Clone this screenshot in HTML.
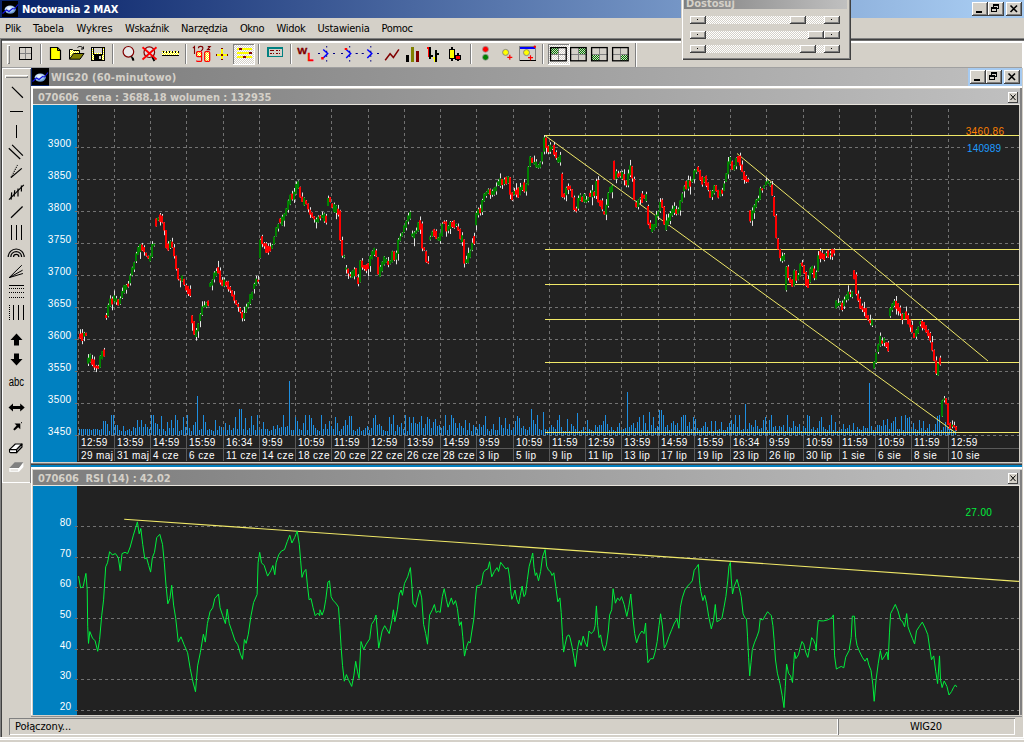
<!DOCTYPE html>
<html lang="pl"><head><meta charset="utf-8"><title>Notowania 2 MAX</title>
<style>
html,body{margin:0;padding:0;}
body{width:1024px;height:742px;overflow:hidden;background:#d4d0c8;position:relative;font:11px 'DejaVu Sans Condensed','Liberation Sans',sans-serif;color:#000;}
.a{position:absolute;}
.t{position:absolute;white-space:pre;line-height:13px;}
.btn{position:absolute;background:#d4d0c8;box-shadow:inset -1px -1px 0 #404040,inset 1px 1px 0 #fff,inset -2px -2px 0 #808080;}
.sep{position:absolute;width:1px;background:#808080;box-shadow:1px 0 0 #fff;}
svg{position:absolute;left:0;top:0;overflow:visible}

</style></head><body>
<div class="a" style="left:0;top:0;width:1024px;height:18px;background:linear-gradient(90deg,#0a246a 0,#0a246a 2%,#a6caf0 96%,#a6caf0 100%)"></div>
<svg width="1024" height="742" viewBox="0 0 1024 742"><g transform="translate(2,1)"><rect width="16" height="16" fill="#000"/><defs><radialGradient id="g21" cx="40%" cy="35%" r="70%"><stop offset="0" stop-color="#fff"/><stop offset="0.6" stop-color="#9cc4ee"/><stop offset="1" stop-color="#4a78b8"/></radialGradient></defs><ellipse cx="8.2" cy="8.6" rx="5.6" ry="4.2" fill="url(#g21)"/><polyline points="0.5,12.5 4.5,9 7,10.5 10.5,7.5 12.5,8 16,3.5" fill="none" stroke="#1010e0" stroke-width="1.1"/></g></svg>
<div class="t" style="left:22px;top:3px;font-weight:bold;color:#fff;letter-spacing:-0.15px">Notowania 2 MAX</div>
<div class="btn" style="left:972px;top:2px;width:16px;height:14px"></div>
<svg width="1024" height="742" viewBox="0 0 1024 742" shape-rendering="crispEdges"><g transform="translate(972,2)"><rect x="4" y="9" width="6" height="2" fill="#000"/></g></svg>
<div class="btn" style="left:988px;top:2px;width:16px;height:14px"></div>
<svg width="1024" height="742" viewBox="0 0 1024 742" shape-rendering="crispEdges"><g transform="translate(988,2)"><rect x="5.5" y="2.5" width="5" height="4" fill="none" stroke="#000"/><rect x="5" y="2" width="6" height="2" fill="#000"/><rect x="3.5" y="5.5" width="5" height="4" fill="#d4d0c8" stroke="#000"/><rect x="3" y="5" width="6" height="2" fill="#000"/></g></svg>
<div class="btn" style="left:1006px;top:2px;width:16px;height:14px"></div>
<svg width="1024" height="742" viewBox="0 0 1024 742" shape-rendering="crispEdges"><g transform="translate(1006,2)"><g shape-rendering="auto"><path d="M4.5 3.5 L11 10 M11 3.5 L4.5 10" stroke="#000" stroke-width="1.6" fill="none"/></g></g></svg>
<div class="t" style="left:5px;top:22px;letter-spacing:-0.30px">Plik</div>
<div class="t" style="left:33px;top:22px;letter-spacing:-0.08px">Tabela</div>
<div class="t" style="left:76.5px;top:22px;letter-spacing:-0.04px">Wykres</div>
<div class="t" style="left:125px;top:22px;letter-spacing:-0.31px">Wskaźnik</div>
<div class="t" style="left:181px;top:22px;letter-spacing:-0.29px">Narzędzia</div>
<div class="t" style="left:240px;top:22px;letter-spacing:-0.46px">Okno</div>
<div class="t" style="left:276.5px;top:22px;letter-spacing:-0.28px">Widok</div>
<div class="t" style="left:317.5px;top:22px;letter-spacing:-0.24px">Ustawienia</div>
<div class="t" style="left:381.5px;top:22px;letter-spacing:-0.36px">Pomoc</div>
<div class="a" style="left:0;top:38px;width:1024px;height:1px;background:#808080"></div>
<div class="a" style="left:1px;top:39px;width:1023px;height:1px;background:#404040"></div>
<div class="a" style="left:2px;top:40px;width:1022px;height:1px;background:#707070"></div>
<div class="a" style="left:2px;top:41px;width:1021px;height:2px;background:#fff"></div>
<div class="a" style="left:0;top:38px;width:1px;height:700px;background:#808080"></div>
<div class="a" style="left:1px;top:39px;width:1px;height:698px;background:#404040"></div>
<div class="a" style="left:1022px;top:41px;width:1px;height:27px;background:#fff"></div>
<div class="a" style="left:635px;top:43px;width:1px;height:24px;background:#808080"></div>
<div class="a" style="left:636px;top:43px;width:1px;height:24px;background:#fff"></div>
<div class="a" style="left:2px;top:67px;width:1020px;height:1px;background:#a0a0a0"></div>
<div class="a" style="left:7px;top:45px;width:3px;height:19px;background:#d4d0c8;box-shadow:inset 1px 1px 0 #fff,inset -1px -1px 0 #808080"></div>
<div class="sep" style="left:39.5px;top:44px;height:20px"></div>
<div class="sep" style="left:112px;top:44px;height:20px"></div>
<div class="sep" style="left:185px;top:44px;height:20px"></div>
<div class="sep" style="left:258px;top:44px;height:20px"></div>
<div class="sep" style="left:290px;top:44px;height:20px"></div>
<div class="sep" style="left:469.5px;top:44px;height:20px"></div>
<div class="sep" style="left:542px;top:44px;height:20px"></div>
<svg width="1024" height="742" viewBox="0 0 1024 742">
<defs>
<pattern id="dy" width="2" height="2" patternUnits="userSpaceOnUse"><rect width="2" height="2" fill="#ffff00"/><rect width="1" height="1" fill="#fff"/><rect x="1" y="1" width="1" height="1" fill="#fff"/></pattern>
<pattern id="dw" width="2" height="2" patternUnits="userSpaceOnUse"><rect width="2" height="2" fill="#d4d0c8"/><rect width="1" height="1" fill="#fff"/><rect x="1" y="1" width="1" height="1" fill="#fff"/></pattern>
<pattern id="dg" width="2" height="2" patternUnits="userSpaceOnUse"><rect width="2" height="2" fill="#008000"/><rect width="1" height="1" fill="#d4d0c8"/><rect x="1" y="1" width="1" height="1" fill="#d4d0c8"/></pattern>
</defs>
<g shape-rendering="crispEdges"><path d="M25.5 48V59M20 53.5H32" stroke="#808080" stroke-width="1" fill="none"/><rect x="19.5" y="47.5" width="12" height="12" fill="none" stroke="#000"/></g>
<path d="M50.5 47.5H57.5L60.5 50.5V59.5H50.5Z" fill="#ffff00" stroke="#000" stroke-width="1.2"/><path d="M57.5 47.5V50.5H60.5" fill="none" stroke="#000" stroke-width="1"/>
<path d="M69.5 59V49.5H72.5L73.5 50.5H79.5V53" fill="url(#dy)" stroke="#000" stroke-width="1"/><path d="M69.5 59.2L73.5 53.5H84L80 59.2Z" fill="#808000" stroke="#000" stroke-width="1"/><path d="M77.5 47.5C79.5 45.8 82 46.2 83 48.5M83.4 46.5V49H81" fill="none" stroke="#000" stroke-width="1"/>
<g shape-rendering="crispEdges"><rect x="91.5" y="47.5" width="13" height="13" fill="url(#dy)" stroke="#000"/><rect x="94" y="48" width="8" height="5" fill="#d4d0c8"/><rect x="94" y="55" width="8" height="5" fill="#000"/><rect x="99" y="56" width="2" height="3" fill="#d4d0c8"/><path d="M93.5 48V54.5H102.5V48" fill="none" stroke="#000"/></g>
<circle cx="128.4" cy="51.8" r="5.3" fill="#e8e8e8" stroke="#800000" stroke-width="1.2"/><path d="M131.3 56.5L133.3 59.2" stroke="#000" stroke-width="1.4"/><path d="M132.3 58L133.6 60.6" stroke="#000" stroke-width="2"/>
<circle cx="149.3" cy="52.2" r="5.3" fill="#e0e0e0" stroke="#800000" stroke-width="1.2"/><path d="M152.3 57L154.4 61" stroke="#000" stroke-width="1.8"/><path d="M142.5 47.3L156.5 59.5M156.5 47.3L142.5 59.5" stroke="#ff0000" stroke-width="1.8"/>
<g shape-rendering="crispEdges"><rect x="162" y="51" width="17" height="4" fill="url(#dy)"/><rect x="162" y="55" width="17" height="1" fill="#000"/><path d="M163.5 51V53M166.5 51V53M169.5 51V53M172.5 51V53M175.5 51V53M178.5 51V53" stroke="#000"/></g>
<g fill="none" stroke="#800000" stroke-width="1.1"><path d="M192.9 48.2L194.5 46.6V54"/><path d="M198.4 48.2Q198.5 46.4 200.7 46.4Q202.9 46.4 202.9 48.2Q202.9 49.6 201 51"/><path d="M207.8 46.6H210.2L207.4 49.6H210.2"/></g>
<rect x="197" y="52" width="4" height="4.5" fill="url(#dy)"/><rect x="205" y="52" width="4.4" height="9" fill="url(#dy)"/>
<path d="M201.6 56.6H197.6Q196.6 56.6 196.6 55.6V52.6Q196.6 51.6 197.6 51.6H200.6Q201.6 51.6 201.6 52.6V60.4Q201.6 61.4 200.6 61.4H197.6Q196.6 61.4 196.6 60.4" fill="none" stroke="#ff0000" stroke-width="1.25"/><rect x="204.7" y="51.6" width="5" height="9.8" rx="1.2" fill="none" stroke="#ff0000" stroke-width="1.25"/>
<g shape-rendering="crispEdges"><rect x="216" y="54" width="12" height="2" fill="#ffff00"/><rect x="221" y="48" width="2" height="12" fill="#ffff00"/><rect x="221" y="54" width="2" height="2" fill="#800000"/><rect x="216" y="54" width="1" height="2" fill="#800000"/><rect x="227" y="54" width="1" height="2" fill="#800000"/><rect x="221" y="48" width="2" height="1" fill="#800000"/><rect x="221" y="59" width="2" height="1" fill="#800000"/></g>
<g shape-rendering="crispEdges"><rect x="233" y="44" width="21" height="20" fill="url(#dw)"/><path d="M233 64V44H254" fill="none" stroke="#808080"/><path d="M254 44V64H233" fill="none" stroke="#fff"/></g>
<g shape-rendering="crispEdges"><rect x="237" y="48" width="15" height="2" fill="#ffff00"/><rect x="237" y="52" width="15" height="2" fill="#ffff00"/><rect x="237" y="56" width="15" height="2" fill="#ffff00"/><rect x="239" y="48" width="3" height="2" fill="#800000"/><rect x="249" y="52" width="3" height="2" fill="#800000"/><rect x="243" y="56" width="3" height="2" fill="#800000"/></g>
<g shape-rendering="crispEdges"><rect x="267.75" y="47.75" width="14.5" height="8.5" fill="none" stroke="#008080" stroke-width="1.5"/><path d="M270 50.5H274M276 50.5H278M279 50.5H280M270 53.5H272M273 53.5H274M276 53.5H278M279 53.5H280" stroke="#800000"/></g>
<text x="297.3" y="54" font-family="'Liberation Sans',sans-serif" font-size="9.5" font-weight="bold" fill="#800000" stroke="#800000" stroke-width="0.3" textLength="10" lengthAdjust="spacingAndGlyphs">W</text><text x="307.6" y="60.8" font-family="'Liberation Sans',sans-serif" font-size="10" font-weight="bold" fill="#ff0000" stroke="#ff0000" stroke-width="0.4">L</text>
<path d="M323.2 49.5L327.7 53.5L323.2 58" fill="none" stroke="#0000ff" stroke-width="1.5"/>
<path d="M326.7 46V62" stroke="#000080" stroke-width="1" stroke-dasharray="1.5 3.2" fill="none"/>
<path d="M318 53.5H320" stroke="#000080" stroke-width="1"/>
<path d="M333 53.5H335" stroke="#000080" stroke-width="1"/>
<rect x="321.2" y="57" width="2.5" height="2.5" fill="#ff0000"/>
<path d="M346.2 49.5L350.7 53.5L346.2 58" fill="none" stroke="#0000ff" stroke-width="1.5"/>
<path d="M349.7 46V62" stroke="#000080" stroke-width="1" stroke-dasharray="1.5 3.2" fill="none"/>
<path d="M341 53.5H343" stroke="#000080" stroke-width="1"/>
<path d="M355.6 53.5H357.8" stroke="#000080" stroke-width="1"/>
<rect x="344.7" y="48" width="2.5" height="2" fill="#ff0000"/>
<path d="M367.3 49.5L371.8 53.5L367.3 58" fill="none" stroke="#0000ff" stroke-width="1.5"/>
<path d="M370.8 46V62" stroke="#000080" stroke-width="1" stroke-dasharray="1.5 3.2" fill="none"/>
<path d="M361.7 53.5H363.8" stroke="#000080" stroke-width="1"/>
<path d="M377 53.5H379" stroke="#000080" stroke-width="1"/>
<polyline points="385.2,60.2 390.1,53.7 393.4,57.5 398.9,49.3" fill="none" stroke="#800000" stroke-width="1.5"/>
<g shape-rendering="crispEdges"><rect x="406" y="55" width="3" height="7" fill="#000"/><rect x="411" y="47" width="3" height="15" fill="#808000"/><rect x="416" y="51" width="3" height="11" fill="#800000"/></g>
<g shape-rendering="crispEdges"><rect x="429" y="47" width="2" height="12" fill="#000"/><rect x="427" y="47" width="2" height="2" fill="#ff0000"/><rect x="428" y="49" width="1" height="8" fill="#ff0000"/><rect x="431" y="55" width="2" height="2" fill="#000"/><rect x="435" y="50" width="2" height="12" fill="#000"/><rect x="433" y="57" width="2" height="2" fill="#ffff00"/><rect x="434" y="57" width="1" height="5" fill="#ffff00"/><rect x="437" y="53" width="2" height="2" fill="#000"/></g>
<g shape-rendering="crispEdges"><rect x="451" y="47" width="2" height="14" fill="#000"/><rect x="449.5" y="49.5" width="5" height="9" fill="#ffff00" stroke="#000"/><rect x="457" y="53" width="2" height="8" fill="#000"/><rect x="455.5" y="55.5" width="5" height="4" fill="#ff0000" stroke="#000"/></g>
<circle cx="485.5" cy="49.3" r="3" fill="#ff0000" stroke="#a0a0a0" stroke-width="0.8"/><circle cx="485.5" cy="57.3" r="3" fill="#008000" stroke="#a0a0a0" stroke-width="0.8"/>
<circle cx="505.6" cy="52.4" r="3" fill="#ffff00" stroke="#808080" stroke-width="0.9"/><path d="M507.3 57.3H512.3M509.8 54.8V59.8" stroke="#ff0000" stroke-width="1.2"/>
<g shape-rendering="crispEdges"><rect x="519.5" y="46.5" width="16" height="14" fill="#d4d0c8" stroke="#808080"/><rect x="520" y="47" width="15" height="2" fill="#0000ff"/><rect x="520" y="60" width="16" height="1" fill="#000"/></g><circle cx="534.8" cy="46.8" r="1.2" fill="#ff0000"/><circle cx="526.5" cy="52.6" r="3" fill="#ffff00" stroke="#808080" stroke-width="0.9"/><path d="M528 57.7H533M530.5 55.2V60.2" stroke="#ff0000" stroke-width="1.2"/>
<g shape-rendering="crispEdges"><rect x="548" y="44" width="21" height="20" fill="url(#dw)"/><path d="M548 64V44H569" fill="none" stroke="#808080"/><path d="M569 44V64H548" fill="none" stroke="#fff"/></g>
<g shape-rendering="crispEdges"><rect x="551" y="48" width="7" height="6" fill="url(#dg)"/><path d="M558.5 47.5V61M550 54.5H566.5" stroke="#808080" fill="none"/></g><rect x="550.6" y="47.6" width="15.6" height="13.2" fill="none" stroke="#000" stroke-width="1.3"/>
<g shape-rendering="crispEdges"><rect x="578.5" y="48" width="7" height="6" fill="url(#dg)"/><path d="M578.5 47.5V61M570 54.5H586.5" stroke="#808080" fill="none"/></g><rect x="570.6" y="47.6" width="15.6" height="13.2" fill="none" stroke="#000" stroke-width="1.3"/>
<g shape-rendering="crispEdges"><rect x="592" y="54.5" width="7" height="6" fill="url(#dg)"/><path d="M599.5 47.5V61M591 54.5H607.5" stroke="#808080" fill="none"/></g><rect x="591.6" y="47.6" width="15.6" height="13.2" fill="none" stroke="#000" stroke-width="1.3"/>
<g shape-rendering="crispEdges"><rect x="620.5" y="54.5" width="7" height="6" fill="url(#dg)"/><path d="M620.5 47.5V61M612 54.5H628.5" stroke="#808080" fill="none"/></g><rect x="612.6" y="47.6" width="15.6" height="13.2" fill="none" stroke="#000" stroke-width="1.3"/>
</svg>
<div class="a" style="left:681px;top:0;width:170px;height:60px;background:#d4d0c8;box-shadow:inset 1px 0 0 #d4d0c8,inset 2px 0 0 #fff,inset -1px -1px 0 #404040,inset -2px -2px 0 #808080"></div>
<div class="a" style="left:684px;top:0;width:163px;height:9px;background:linear-gradient(90deg,#808080,#c0c0c0);overflow:hidden"><div class="t" style="left:2px;top:-3px;font-weight:bold;color:#d4d0c8">Dostosuj</div></div>
<div class="a" style="left:706px;top:16px;width:118px;height:8px;background:repeating-conic-gradient(#fff 0 25%,#d4d0c8 0 50%) 0 0/2px 2px"></div>
<div class="btn" style="left:690px;top:16px;width:16px;height:8px"></div>
<div class="btn" style="left:824px;top:16px;width:16px;height:8px"></div>
<div class="btn" style="left:790px;top:16px;width:16px;height:8px"></div>
<div class="a" style="left:697px;top:19px;width:1px;height:1px;background:#000"></div><div class="a" style="left:831px;top:19px;width:1px;height:1px;background:#000"></div>
<div class="a" style="left:706px;top:31px;width:118px;height:8px;background:repeating-conic-gradient(#fff 0 25%,#d4d0c8 0 50%) 0 0/2px 2px"></div>
<div class="btn" style="left:690px;top:31px;width:16px;height:8px"></div>
<div class="btn" style="left:824px;top:31px;width:16px;height:8px"></div>
<div class="btn" style="left:808px;top:31px;width:16px;height:8px"></div>
<div class="a" style="left:697px;top:34px;width:1px;height:1px;background:#000"></div><div class="a" style="left:831px;top:34px;width:1px;height:1px;background:#000"></div>
<div class="a" style="left:706px;top:45px;width:118px;height:8px;background:repeating-conic-gradient(#fff 0 25%,#d4d0c8 0 50%) 0 0/2px 2px"></div>
<div class="btn" style="left:690px;top:45px;width:16px;height:8px"></div>
<div class="btn" style="left:824px;top:45px;width:16px;height:8px"></div>
<div class="btn" style="left:800px;top:45px;width:16px;height:8px"></div>
<div class="a" style="left:697px;top:48px;width:1px;height:1px;background:#000"></div><div class="a" style="left:831px;top:48px;width:1px;height:1px;background:#000"></div>
<div class="a" style="left:2px;top:68px;width:29px;height:415px;box-shadow:inset 1px 1px 0 #fff,inset -1px 0 0 #808080,inset 0 -1px 0 #fff"></div>
<div class="a" style="left:5px;top:75px;width:23px;height:3px;box-shadow:inset 1px 1px 0 #fff,inset -1px -1px 0 #808080"></div>
<svg width="1024" height="742" viewBox="0 0 1024 742"><g stroke="#000" stroke-width="1.2" fill="none">
<path d="M11.9 86.9L22.9 97.7"/><path d="M10 111.5H23" shape-rendering="crispEdges"/><path d="M16.5 125V137.5" shape-rendering="crispEdges"/>
<path d="M8.8 148.2L20.2 159M12.1 144.8L22.9 155.6"/>
<path d="M11 177.5L21.8 168.4"/><path d="M11 177.5L17.5 165.1" stroke-dasharray="1 1.2"/>
<path d="M9 199.7L23.8 184.8"/><path d="M11.1 199.6L11.7 192.4M14.1 196.6L14.7 190.3M18 196.4V188.5M21.4 191.5V185.5" stroke-width="1.2"/>
<path d="M11 217.7L22.6 206.5"/>
<path d="M11.5 225V239.5M16.5 225V239.5M21.5 225V239.5" shape-rendering="crispEdges"/>
<path d="M8.2 257A8 8 0 0 1 24.2 257M10.8 257A5.4 5.4 0 0 1 21.6 257M13.5 257A2.7 2.7 0 0 1 18.9 257"/>
<path d="M9.2 277.6L21.8 265.2M9.2 277.6L22.6 270.2M9.2 277.6L22.9 273.5" stroke-width="1"/>
<g shape-rendering="crispEdges"><path d="M9 285.5H24"/><path d="M9 288.5H24M9 292.5H24M9 297.5H24" stroke-dasharray="1 1"/>
<path d="M9.5 305V320" stroke-dasharray="1 1"/><path d="M13.5 305V320M18.5 305V320M23.5 305V320"/></g>
</g><g fill="#000">
<path d="M16.5 333.5L22.5 340H19V345.5H14V340H10.5Z"/>
<path d="M16.5 365.5L22.5 359H19V353.5H14V359H10.5Z"/>
<path d="M8.5 407.5L13 403.6V406.1H20.2V403.6L24.7 407.5L20.2 411.4V408.9H13V411.4Z"/>
<path d="M14.5 423.5H20.3V429.2L18.2 427.2L14.6 430.6L13.2 429.2L16.6 425.6Z"/><rect x="21" y="422.2" width="1" height="1"/>
</g>
<path d="M9.5 449.6L15.3 444H22L16.6 449.6Z" fill="#fff" stroke="#000" stroke-width="1.1" stroke-linejoin="round"/><path d="M9.5 449.6V451.5Q9.5 452.6 10.6 452.6H16.6V449.6Z" fill="#fff" stroke="#000" stroke-width="1.1"/><path d="M16.6 452.6L22 447V444L16.6 449.6Z" fill="#b0b0b0" stroke="#000" stroke-width="1.1" stroke-linejoin="round"/>
<path d="M9.3 468L14.7 462.2H23.3L19 468Z" fill="#808080"/><path d="M9.3 468V471.8H19V468Z" fill="#fff"/><path d="M19 471.8L23.4 467V462.4L19 468Z" fill="#fff"/><path d="M10.5 470H18" stroke="#d4d0c8" stroke-width="1"/>
<text x="8.7" y="385.5" font-family="'Liberation Sans',sans-serif" font-size="12" fill="#000" textLength="15.3" lengthAdjust="spacingAndGlyphs">abc</text>
</svg>
<div class="a" style="left:31px;top:68px;width:991px;height:18px;background:linear-gradient(90deg,#808080 0,#808080 8%,#c0c0c0 100%)"></div>
<div class="a" style="left:968px;top:68px;width:54px;height:18px;background:#a6caf0"></div>
<div class="a" style="left:31px;top:68px;width:18px;height:18px;background:#000;box-shadow:inset 1px 0 0 #0a246a,inset 0 -1px 0 #0a246a"></div>
<svg width="1024" height="742" viewBox="0 0 1024 742"><g transform="translate(32,69)"><rect width="16" height="16" fill="#000"/><defs><radialGradient id="g3269" cx="40%" cy="35%" r="70%"><stop offset="0" stop-color="#fff"/><stop offset="0.6" stop-color="#9cc4ee"/><stop offset="1" stop-color="#4a78b8"/></radialGradient></defs><ellipse cx="8.2" cy="8.6" rx="5.6" ry="4.2" fill="url(#g3269)"/><polyline points="0.5,12.5 4.5,9 7,10.5 10.5,7.5 12.5,8 16,3.5" fill="none" stroke="#1010e0" stroke-width="1.1"/></g></svg>
<div class="t" style="left:51px;top:71px;font-weight:bold;color:#d4d0c8;letter-spacing:0.18px">WIG20 (60-minutowo)</div>
<div class="btn" style="left:970px;top:70px;width:16px;height:14px"></div>
<svg width="1024" height="742" viewBox="0 0 1024 742" shape-rendering="crispEdges"><g transform="translate(970,70)"><rect x="4" y="9" width="6" height="2" fill="#000"/></g></svg>
<div class="btn" style="left:986px;top:70px;width:16px;height:14px"></div>
<svg width="1024" height="742" viewBox="0 0 1024 742" shape-rendering="crispEdges"><g transform="translate(986,70)"><rect x="5.5" y="2.5" width="5" height="4" fill="none" stroke="#000"/><rect x="5" y="2" width="6" height="2" fill="#000"/><rect x="3.5" y="5.5" width="5" height="4" fill="#d4d0c8" stroke="#000"/><rect x="3" y="5" width="6" height="2" fill="#000"/></g></svg>
<div class="btn" style="left:1004px;top:70px;width:16px;height:14px"></div>
<svg width="1024" height="742" viewBox="0 0 1024 742" shape-rendering="crispEdges"><g transform="translate(1004,70)"><g shape-rendering="auto"><path d="M4.5 3.5 L11 10 M11 3.5 L4.5 10" stroke="#000" stroke-width="1.6" fill="none"/></g></g></svg>
<div class="a" style="left:31px;top:86px;width:991px;height:2px;background:#fff"></div>
<div class="a" style="left:31px;top:86px;width:2px;height:630px;background:#fff"></div>
<div class="a" style="left:30px;top:86px;width:1px;height:397px;background:#808080"></div>
<div class="a" style="left:1020px;top:88px;width:2px;height:629px;background:#808080"></div>
<div class="a" style="left:1023px;top:41px;width:1px;height:699px;background:#fff"></div>
<div class="a" style="left:33px;top:89px;width:987px;height:15px;background:linear-gradient(90deg,#808080 0,#808080 8%,#c0c0c0 100%)"></div>
<div class="t" style="left:38px;top:91px;font-weight:bold;color:#d4d0c8;letter-spacing:-0.08px">070606  cena : 3688.18 wolumen : 132935</div>
<div class="btn" style="left:1008px;top:92px;width:10px;height:11px;box-shadow:inset -1px -1px 0 #404040,inset 1px 1px 0 #fff"></div>
<svg width="1024" height="742" viewBox="0 0 1024 742"><path d="M1010.5 94.5L1015.5 100M1015.5 94.5L1010.5 100" stroke="#000" stroke-width="1"/></svg>
<div class="a" style="left:33px;top:104px;width:987px;height:1px;background:#e8e4dc"></div>
<div class="a" style="left:33px;top:105px;width:44px;height:357px;background:#0080c0"></div>
<div class="a" style="left:77px;top:105px;width:942px;height:357px;background:#222222"></div>
<div class="a" style="left:33px;top:462px;width:989px;height:1px;background:#d4d0c8"></div>
<div class="a" style="left:31px;top:463px;width:991px;height:1px;background:#808080"></div>
<div class="a" style="left:31px;top:464px;width:991px;height:1px;background:#404040"></div>
<div class="a" style="left:31px;top:465px;width:991px;height:2px;background:#0080c0"></div>
<div class="a" style="left:31px;top:467px;width:991px;height:2px;background:#fff"></div>
<div class="a" style="left:33px;top:469px;width:989px;height:1px;background:#d4d0c8"></div>
<div class="a" style="left:32px;top:469px;width:1px;height:246px;background:#d4d0c8"></div>
<div class="a" style="left:33px;top:470px;width:987px;height:15px;background:linear-gradient(90deg,#808080 0,#808080 8%,#c0c0c0 100%)"></div>
<div class="t" style="left:38px;top:472px;font-weight:bold;color:#d4d0c8;letter-spacing:-0.1px">070606  RSI (14) : 42.02</div>
<div class="btn" style="left:1008px;top:473px;width:10px;height:11px;box-shadow:inset -1px -1px 0 #404040,inset 1px 1px 0 #fff"></div>
<svg width="1024" height="742" viewBox="0 0 1024 742"><path d="M1010.5 475.5L1015.5 481M1015.5 475.5L1010.5 481" stroke="#000" stroke-width="1"/></svg>
<div class="a" style="left:33px;top:485px;width:987px;height:1px;background:#e8e4dc"></div>
<div class="a" style="left:33px;top:486px;width:44px;height:229px;background:#0080c0"></div>
<div class="a" style="left:77px;top:486px;width:942px;height:229px;background:#222222"></div>
<div class="a" style="left:31px;top:715px;width:991px;height:1px;background:#d4d0c8"></div>
<div class="a" style="left:31px;top:716px;width:991px;height:1px;background:#909090"></div>
<svg width="1024" height="742" viewBox="0 0 1024 742">
<g shape-rendering="crispEdges" stroke="#727272" stroke-width="1" stroke-dasharray="3 3" fill="none">
<path d="M78.5 109V436"/>
<path d="M114.5 109V436"/>
<path d="M150.5 109V436"/>
<path d="M186.5 109V436"/>
<path d="M223.5 109V436"/>
<path d="M259.5 109V436"/>
<path d="M295.5 109V436"/>
<path d="M331.5 109V436"/>
<path d="M368.5 109V436"/>
<path d="M404.5 109V436"/>
<path d="M440.5 109V436"/>
<path d="M476.5 109V436"/>
<path d="M513.5 109V436"/>
<path d="M549.5 109V436"/>
<path d="M585.5 109V436"/>
<path d="M621.5 109V436"/>
<path d="M658.5 109V436"/>
<path d="M694.5 109V436"/>
<path d="M730.5 109V436"/>
<path d="M766.5 109V436"/>
<path d="M803.5 109V436"/>
<path d="M839.5 109V436"/>
<path d="M875.5 109V436"/>
<path d="M911.5 109V436"/>
<path d="M948.5 109V436"/>
<path d="M81 147.5H1019"/>
<path d="M81 179.5H1019"/>
<path d="M81 211.5H1019"/>
<path d="M81 243.5H1019"/>
<path d="M81 275.5H1019"/>
<path d="M81 307.5H1019"/>
<path d="M81 339.5H1019"/>
<path d="M81 371.5H1019"/>
<path d="M81 403.5H1019"/>
<path d="M81 435.5H1019"/>
<path d="M81 526.5H1019"/>
<path d="M81 557.5H1019"/>
<path d="M81 587.5H1019"/>
<path d="M81 618.5H1019"/>
<path d="M81 649.5H1019"/>
<path d="M81 679.5H1019"/>
<path d="M81 710.5H1019"/>
</g>
<g shape-rendering="crispEdges" stroke="#707070" stroke-width="1">
<path d="M75 147.5H78"/>
<path d="M75 179.5H78"/>
<path d="M75 211.5H78"/>
<path d="M75 243.5H78"/>
<path d="M75 275.5H78"/>
<path d="M75 307.5H78"/>
<path d="M75 339.5H78"/>
<path d="M75 371.5H78"/>
<path d="M75 403.5H78"/>
<path d="M75 435.5H78"/>
<path d="M75 526.5H78"/>
<path d="M75 557.5H78"/>
<path d="M75 587.5H78"/>
<path d="M75 618.5H78"/>
<path d="M75 649.5H78"/>
<path d="M75 679.5H78"/>
<path d="M75 710.5H78"/>
</g>
<g shape-rendering="crispEdges" stroke="#5a5a5a" stroke-width="1" fill="none">
<path d="M78 448.5H1019"/>
<path d="M78.5 436V461"/>
<path d="M114.5 436V461"/>
<path d="M150.5 436V461"/>
<path d="M186.5 436V461"/>
<path d="M223.5 436V461"/>
<path d="M259.5 436V461"/>
<path d="M295.5 436V461"/>
<path d="M331.5 436V461"/>
<path d="M368.5 436V461"/>
<path d="M404.5 436V461"/>
<path d="M440.5 436V461"/>
<path d="M476.5 436V461"/>
<path d="M513.5 436V461"/>
<path d="M549.5 436V461"/>
<path d="M585.5 436V461"/>
<path d="M621.5 436V461"/>
<path d="M658.5 436V461"/>
<path d="M694.5 436V461"/>
<path d="M730.5 436V461"/>
<path d="M766.5 436V461"/>
<path d="M803.5 436V461"/>
<path d="M839.5 436V461"/>
<path d="M875.5 436V461"/>
<path d="M911.5 436V461"/>
<path d="M948.5 436V461"/>
</g>
<g shape-rendering="crispEdges" fill="#1e8ee0">
<rect x="79" y="429" width="1" height="6"/>
<rect x="81" y="429" width="1" height="6"/>
<rect x="83" y="429" width="1" height="6"/>
<rect x="85" y="429" width="1" height="6"/>
<rect x="87" y="429" width="1" height="6"/>
<rect x="89" y="429" width="1" height="6"/>
<rect x="91" y="430" width="1" height="5"/>
<rect x="93" y="429" width="1" height="6"/>
<rect x="95" y="429" width="1" height="6"/>
<rect x="97" y="429" width="1" height="6"/>
<rect x="99" y="430" width="1" height="5"/>
<rect x="101" y="429" width="1" height="6"/>
<rect x="103" y="421" width="1" height="14"/>
<rect x="105" y="421" width="1" height="14"/>
<rect x="107" y="424" width="1" height="11"/>
<rect x="109" y="431" width="1" height="4"/>
<rect x="111" y="415" width="1" height="20"/>
<rect x="113" y="415" width="1" height="20"/>
<rect x="115" y="425" width="1" height="10"/>
<rect x="117" y="425" width="1" height="10"/>
<rect x="119" y="430" width="1" height="5"/>
<rect x="121" y="431" width="1" height="4"/>
<rect x="123" y="426" width="1" height="9"/>
<rect x="125" y="431" width="1" height="4"/>
<rect x="127" y="430" width="1" height="5"/>
<rect x="129" y="429" width="1" height="6"/>
<rect x="131" y="431" width="1" height="4"/>
<rect x="133" y="427" width="1" height="8"/>
<rect x="135" y="428" width="1" height="7"/>
<rect x="137" y="420" width="1" height="15"/>
<rect x="139" y="427" width="1" height="8"/>
<rect x="141" y="420" width="1" height="15"/>
<rect x="143" y="427" width="1" height="8"/>
<rect x="145" y="424" width="1" height="11"/>
<rect x="147" y="427" width="1" height="8"/>
<rect x="149" y="429" width="1" height="6"/>
<rect x="151" y="415" width="1" height="20"/>
<rect x="153" y="415" width="1" height="20"/>
<rect x="155" y="423" width="1" height="12"/>
<rect x="157" y="424" width="1" height="11"/>
<rect x="159" y="429" width="1" height="6"/>
<rect x="161" y="416" width="1" height="19"/>
<rect x="163" y="429" width="1" height="6"/>
<rect x="165" y="431" width="1" height="4"/>
<rect x="167" y="422" width="1" height="13"/>
<rect x="169" y="428" width="1" height="7"/>
<rect x="171" y="420" width="1" height="15"/>
<rect x="173" y="428" width="1" height="7"/>
<rect x="175" y="415" width="1" height="20"/>
<rect x="177" y="420" width="1" height="15"/>
<rect x="179" y="431" width="1" height="4"/>
<rect x="181" y="430" width="1" height="5"/>
<rect x="183" y="417" width="1" height="18"/>
<rect x="185" y="427" width="1" height="8"/>
<rect x="187" y="415" width="1" height="20"/>
<rect x="189" y="428" width="1" height="7"/>
<rect x="191" y="431" width="1" height="4"/>
<rect x="193" y="425" width="1" height="10"/>
<rect x="195" y="422" width="1" height="13"/>
<rect x="197" y="396" width="1" height="39"/>
<rect x="199" y="430" width="1" height="5"/>
<rect x="201" y="429" width="1" height="6"/>
<rect x="203" y="415" width="1" height="20"/>
<rect x="205" y="422" width="1" height="13"/>
<rect x="207" y="430" width="1" height="5"/>
<rect x="209" y="429" width="1" height="6"/>
<rect x="211" y="430" width="1" height="5"/>
<rect x="213" y="431" width="1" height="4"/>
<rect x="215" y="420" width="1" height="15"/>
<rect x="217" y="430" width="1" height="5"/>
<rect x="219" y="426" width="1" height="9"/>
<rect x="221" y="427" width="1" height="8"/>
<rect x="223" y="430" width="1" height="5"/>
<rect x="225" y="423" width="1" height="12"/>
<rect x="227" y="430" width="1" height="5"/>
<rect x="229" y="425" width="1" height="10"/>
<rect x="231" y="430" width="1" height="5"/>
<rect x="233" y="428" width="1" height="7"/>
<rect x="235" y="417" width="1" height="18"/>
<rect x="237" y="429" width="1" height="6"/>
<rect x="239" y="409" width="1" height="26"/>
<rect x="241" y="409" width="1" height="26"/>
<rect x="243" y="429" width="1" height="6"/>
<rect x="245" y="418" width="1" height="17"/>
<rect x="247" y="430" width="1" height="5"/>
<rect x="249" y="428" width="1" height="7"/>
<rect x="251" y="416" width="1" height="19"/>
<rect x="253" y="425" width="1" height="10"/>
<rect x="255" y="430" width="1" height="5"/>
<rect x="257" y="415" width="1" height="20"/>
<rect x="259" y="430" width="1" height="5"/>
<rect x="261" y="429" width="1" height="6"/>
<rect x="263" y="422" width="1" height="13"/>
<rect x="265" y="429" width="1" height="6"/>
<rect x="267" y="429" width="1" height="6"/>
<rect x="269" y="431" width="1" height="4"/>
<rect x="271" y="430" width="1" height="5"/>
<rect x="273" y="426" width="1" height="9"/>
<rect x="275" y="429" width="1" height="6"/>
<rect x="277" y="425" width="1" height="10"/>
<rect x="279" y="428" width="1" height="7"/>
<rect x="281" y="427" width="1" height="8"/>
<rect x="283" y="415" width="1" height="20"/>
<rect x="285" y="427" width="1" height="8"/>
<rect x="287" y="426" width="1" height="9"/>
<rect x="289" y="381" width="1" height="54"/>
<rect x="291" y="430" width="1" height="5"/>
<rect x="293" y="430" width="1" height="5"/>
<rect x="295" y="417" width="1" height="18"/>
<rect x="297" y="421" width="1" height="14"/>
<rect x="299" y="429" width="1" height="6"/>
<rect x="301" y="430" width="1" height="5"/>
<rect x="303" y="423" width="1" height="12"/>
<rect x="305" y="415" width="1" height="20"/>
<rect x="307" y="430" width="1" height="5"/>
<rect x="309" y="415" width="1" height="20"/>
<rect x="311" y="418" width="1" height="17"/>
<rect x="313" y="425" width="1" height="10"/>
<rect x="315" y="428" width="1" height="7"/>
<rect x="317" y="430" width="1" height="5"/>
<rect x="319" y="431" width="1" height="4"/>
<rect x="321" y="415" width="1" height="20"/>
<rect x="323" y="429" width="1" height="6"/>
<rect x="325" y="424" width="1" height="11"/>
<rect x="327" y="429" width="1" height="6"/>
<rect x="329" y="421" width="1" height="14"/>
<rect x="331" y="426" width="1" height="9"/>
<rect x="333" y="429" width="1" height="6"/>
<rect x="335" y="417" width="1" height="18"/>
<rect x="337" y="423" width="1" height="12"/>
<rect x="339" y="431" width="1" height="4"/>
<rect x="341" y="429" width="1" height="6"/>
<rect x="343" y="426" width="1" height="9"/>
<rect x="345" y="420" width="1" height="15"/>
<rect x="347" y="425" width="1" height="10"/>
<rect x="349" y="416" width="1" height="19"/>
<rect x="351" y="416" width="1" height="19"/>
<rect x="353" y="430" width="1" height="5"/>
<rect x="355" y="431" width="1" height="4"/>
<rect x="357" y="429" width="1" height="6"/>
<rect x="359" y="427" width="1" height="8"/>
<rect x="361" y="431" width="1" height="4"/>
<rect x="363" y="430" width="1" height="5"/>
<rect x="365" y="428" width="1" height="7"/>
<rect x="367" y="426" width="1" height="9"/>
<rect x="369" y="430" width="1" height="5"/>
<rect x="371" y="428" width="1" height="7"/>
<rect x="373" y="418" width="1" height="17"/>
<rect x="375" y="415" width="1" height="20"/>
<rect x="377" y="425" width="1" height="10"/>
<rect x="379" y="424" width="1" height="11"/>
<rect x="381" y="426" width="1" height="9"/>
<rect x="383" y="430" width="1" height="5"/>
<rect x="385" y="431" width="1" height="4"/>
<rect x="387" y="431" width="1" height="4"/>
<rect x="389" y="417" width="1" height="18"/>
<rect x="391" y="424" width="1" height="11"/>
<rect x="393" y="415" width="1" height="20"/>
<rect x="395" y="431" width="1" height="4"/>
<rect x="397" y="425" width="1" height="10"/>
<rect x="399" y="427" width="1" height="8"/>
<rect x="401" y="423" width="1" height="12"/>
<rect x="403" y="429" width="1" height="6"/>
<rect x="405" y="415" width="1" height="20"/>
<rect x="407" y="431" width="1" height="4"/>
<rect x="409" y="417" width="1" height="18"/>
<rect x="411" y="423" width="1" height="12"/>
<rect x="413" y="417" width="1" height="18"/>
<rect x="415" y="423" width="1" height="12"/>
<rect x="417" y="424" width="1" height="11"/>
<rect x="419" y="422" width="1" height="13"/>
<rect x="421" y="416" width="1" height="19"/>
<rect x="423" y="428" width="1" height="7"/>
<rect x="425" y="424" width="1" height="11"/>
<rect x="427" y="417" width="1" height="18"/>
<rect x="429" y="419" width="1" height="16"/>
<rect x="431" y="428" width="1" height="7"/>
<rect x="433" y="422" width="1" height="13"/>
<rect x="435" y="419" width="1" height="16"/>
<rect x="437" y="426" width="1" height="9"/>
<rect x="439" y="425" width="1" height="10"/>
<rect x="441" y="428" width="1" height="7"/>
<rect x="443" y="426" width="1" height="9"/>
<rect x="445" y="415" width="1" height="20"/>
<rect x="447" y="430" width="1" height="5"/>
<rect x="449" y="425" width="1" height="10"/>
<rect x="451" y="415" width="1" height="20"/>
<rect x="453" y="418" width="1" height="17"/>
<rect x="455" y="423" width="1" height="12"/>
<rect x="457" y="428" width="1" height="7"/>
<rect x="459" y="423" width="1" height="12"/>
<rect x="461" y="426" width="1" height="9"/>
<rect x="463" y="428" width="1" height="7"/>
<rect x="465" y="420" width="1" height="15"/>
<rect x="467" y="430" width="1" height="5"/>
<rect x="469" y="423" width="1" height="12"/>
<rect x="471" y="431" width="1" height="4"/>
<rect x="473" y="425" width="1" height="10"/>
<rect x="475" y="427" width="1" height="8"/>
<rect x="477" y="429" width="1" height="6"/>
<rect x="479" y="424" width="1" height="11"/>
<rect x="481" y="427" width="1" height="8"/>
<rect x="483" y="425" width="1" height="10"/>
<rect x="485" y="416" width="1" height="19"/>
<rect x="487" y="429" width="1" height="6"/>
<rect x="489" y="431" width="1" height="4"/>
<rect x="491" y="429" width="1" height="6"/>
<rect x="493" y="424" width="1" height="11"/>
<rect x="495" y="430" width="1" height="5"/>
<rect x="497" y="430" width="1" height="5"/>
<rect x="499" y="417" width="1" height="18"/>
<rect x="501" y="425" width="1" height="10"/>
<rect x="503" y="428" width="1" height="7"/>
<rect x="505" y="418" width="1" height="17"/>
<rect x="507" y="429" width="1" height="6"/>
<rect x="509" y="424" width="1" height="11"/>
<rect x="511" y="430" width="1" height="5"/>
<rect x="513" y="428" width="1" height="7"/>
<rect x="515" y="421" width="1" height="14"/>
<rect x="517" y="416" width="1" height="19"/>
<rect x="519" y="418" width="1" height="17"/>
<rect x="521" y="428" width="1" height="7"/>
<rect x="523" y="426" width="1" height="9"/>
<rect x="525" y="429" width="1" height="6"/>
<rect x="527" y="430" width="1" height="5"/>
<rect x="529" y="427" width="1" height="8"/>
<rect x="531" y="409" width="1" height="26"/>
<rect x="533" y="420" width="1" height="15"/>
<rect x="535" y="424" width="1" height="11"/>
<rect x="537" y="415" width="1" height="20"/>
<rect x="539" y="429" width="1" height="6"/>
<rect x="541" y="430" width="1" height="5"/>
<rect x="543" y="412" width="1" height="23"/>
<rect x="545" y="429" width="1" height="6"/>
<rect x="547" y="430" width="1" height="5"/>
<rect x="549" y="428" width="1" height="7"/>
<rect x="551" y="425" width="1" height="10"/>
<rect x="553" y="427" width="1" height="8"/>
<rect x="555" y="429" width="1" height="6"/>
<rect x="557" y="420" width="1" height="15"/>
<rect x="559" y="415" width="1" height="20"/>
<rect x="561" y="427" width="1" height="8"/>
<rect x="563" y="431" width="1" height="4"/>
<rect x="565" y="431" width="1" height="4"/>
<rect x="567" y="419" width="1" height="16"/>
<rect x="569" y="431" width="1" height="4"/>
<rect x="571" y="424" width="1" height="11"/>
<rect x="573" y="426" width="1" height="9"/>
<rect x="575" y="429" width="1" height="6"/>
<rect x="577" y="413" width="1" height="22"/>
<rect x="579" y="431" width="1" height="4"/>
<rect x="581" y="430" width="1" height="5"/>
<rect x="583" y="427" width="1" height="8"/>
<rect x="585" y="431" width="1" height="4"/>
<rect x="587" y="420" width="1" height="15"/>
<rect x="589" y="429" width="1" height="6"/>
<rect x="591" y="430" width="1" height="5"/>
<rect x="593" y="431" width="1" height="4"/>
<rect x="595" y="425" width="1" height="10"/>
<rect x="597" y="427" width="1" height="8"/>
<rect x="599" y="425" width="1" height="10"/>
<rect x="601" y="425" width="1" height="10"/>
<rect x="603" y="421" width="1" height="14"/>
<rect x="605" y="415" width="1" height="20"/>
<rect x="607" y="424" width="1" height="11"/>
<rect x="609" y="430" width="1" height="5"/>
<rect x="611" y="427" width="1" height="8"/>
<rect x="613" y="430" width="1" height="5"/>
<rect x="615" y="431" width="1" height="4"/>
<rect x="617" y="427" width="1" height="8"/>
<rect x="619" y="423" width="1" height="12"/>
<rect x="621" y="430" width="1" height="5"/>
<rect x="623" y="429" width="1" height="6"/>
<rect x="625" y="428" width="1" height="7"/>
<rect x="627" y="392" width="1" height="43"/>
<rect x="629" y="427" width="1" height="8"/>
<rect x="631" y="425" width="1" height="10"/>
<rect x="633" y="423" width="1" height="12"/>
<rect x="635" y="428" width="1" height="7"/>
<rect x="637" y="422" width="1" height="13"/>
<rect x="639" y="417" width="1" height="18"/>
<rect x="641" y="430" width="1" height="5"/>
<rect x="643" y="415" width="1" height="20"/>
<rect x="645" y="423" width="1" height="12"/>
<rect x="647" y="430" width="1" height="5"/>
<rect x="649" y="412" width="1" height="23"/>
<rect x="651" y="425" width="1" height="10"/>
<rect x="653" y="417" width="1" height="18"/>
<rect x="655" y="428" width="1" height="7"/>
<rect x="657" y="426" width="1" height="9"/>
<rect x="659" y="410" width="1" height="25"/>
<rect x="661" y="410" width="1" height="25"/>
<rect x="663" y="415" width="1" height="20"/>
<rect x="665" y="427" width="1" height="8"/>
<rect x="667" y="425" width="1" height="10"/>
<rect x="669" y="430" width="1" height="5"/>
<rect x="671" y="423" width="1" height="12"/>
<rect x="673" y="421" width="1" height="14"/>
<rect x="675" y="425" width="1" height="10"/>
<rect x="677" y="423" width="1" height="12"/>
<rect x="679" y="430" width="1" height="5"/>
<rect x="681" y="417" width="1" height="18"/>
<rect x="683" y="415" width="1" height="20"/>
<rect x="685" y="415" width="1" height="20"/>
<rect x="687" y="426" width="1" height="9"/>
<rect x="689" y="422" width="1" height="13"/>
<rect x="691" y="429" width="1" height="6"/>
<rect x="693" y="417" width="1" height="18"/>
<rect x="695" y="419" width="1" height="16"/>
<rect x="697" y="428" width="1" height="7"/>
<rect x="699" y="430" width="1" height="5"/>
<rect x="701" y="428" width="1" height="7"/>
<rect x="703" y="426" width="1" height="9"/>
<rect x="705" y="422" width="1" height="13"/>
<rect x="707" y="427" width="1" height="8"/>
<rect x="709" y="431" width="1" height="4"/>
<rect x="711" y="421" width="1" height="14"/>
<rect x="713" y="431" width="1" height="4"/>
<rect x="715" y="421" width="1" height="14"/>
<rect x="717" y="430" width="1" height="5"/>
<rect x="719" y="429" width="1" height="6"/>
<rect x="721" y="422" width="1" height="13"/>
<rect x="723" y="430" width="1" height="5"/>
<rect x="725" y="430" width="1" height="5"/>
<rect x="727" y="427" width="1" height="8"/>
<rect x="729" y="423" width="1" height="12"/>
<rect x="731" y="420" width="1" height="15"/>
<rect x="733" y="424" width="1" height="11"/>
<rect x="735" y="415" width="1" height="20"/>
<rect x="737" y="427" width="1" height="8"/>
<rect x="739" y="415" width="1" height="20"/>
<rect x="741" y="430" width="1" height="5"/>
<rect x="743" y="429" width="1" height="6"/>
<rect x="745" y="404" width="1" height="31"/>
<rect x="747" y="429" width="1" height="6"/>
<rect x="749" y="423" width="1" height="12"/>
<rect x="751" y="425" width="1" height="10"/>
<rect x="753" y="427" width="1" height="8"/>
<rect x="755" y="420" width="1" height="15"/>
<rect x="757" y="426" width="1" height="9"/>
<rect x="759" y="429" width="1" height="6"/>
<rect x="761" y="428" width="1" height="7"/>
<rect x="763" y="420" width="1" height="15"/>
<rect x="765" y="417" width="1" height="18"/>
<rect x="767" y="430" width="1" height="5"/>
<rect x="769" y="420" width="1" height="15"/>
<rect x="771" y="415" width="1" height="20"/>
<rect x="773" y="427" width="1" height="8"/>
<rect x="775" y="426" width="1" height="9"/>
<rect x="777" y="430" width="1" height="5"/>
<rect x="779" y="426" width="1" height="9"/>
<rect x="781" y="427" width="1" height="8"/>
<rect x="783" y="425" width="1" height="10"/>
<rect x="785" y="431" width="1" height="4"/>
<rect x="787" y="415" width="1" height="20"/>
<rect x="789" y="427" width="1" height="8"/>
<rect x="791" y="428" width="1" height="7"/>
<rect x="793" y="421" width="1" height="14"/>
<rect x="795" y="426" width="1" height="9"/>
<rect x="797" y="427" width="1" height="8"/>
<rect x="799" y="424" width="1" height="11"/>
<rect x="801" y="431" width="1" height="4"/>
<rect x="803" y="426" width="1" height="9"/>
<rect x="805" y="428" width="1" height="7"/>
<rect x="807" y="415" width="1" height="20"/>
<rect x="809" y="416" width="1" height="19"/>
<rect x="811" y="429" width="1" height="6"/>
<rect x="813" y="427" width="1" height="8"/>
<rect x="815" y="430" width="1" height="5"/>
<rect x="817" y="428" width="1" height="7"/>
<rect x="819" y="421" width="1" height="14"/>
<rect x="821" y="417" width="1" height="18"/>
<rect x="823" y="427" width="1" height="8"/>
<rect x="825" y="429" width="1" height="6"/>
<rect x="827" y="430" width="1" height="5"/>
<rect x="829" y="425" width="1" height="10"/>
<rect x="831" y="415" width="1" height="20"/>
<rect x="833" y="430" width="1" height="5"/>
<rect x="835" y="422" width="1" height="13"/>
<rect x="837" y="431" width="1" height="4"/>
<rect x="839" y="430" width="1" height="5"/>
<rect x="841" y="429" width="1" height="6"/>
<rect x="843" y="424" width="1" height="11"/>
<rect x="845" y="429" width="1" height="6"/>
<rect x="847" y="428" width="1" height="7"/>
<rect x="849" y="425" width="1" height="10"/>
<rect x="851" y="430" width="1" height="5"/>
<rect x="853" y="423" width="1" height="12"/>
<rect x="855" y="430" width="1" height="5"/>
<rect x="857" y="427" width="1" height="8"/>
<rect x="859" y="429" width="1" height="6"/>
<rect x="861" y="430" width="1" height="5"/>
<rect x="863" y="426" width="1" height="9"/>
<rect x="865" y="428" width="1" height="7"/>
<rect x="867" y="428" width="1" height="7"/>
<rect x="869" y="383" width="1" height="52"/>
<rect x="871" y="426" width="1" height="9"/>
<rect x="873" y="430" width="1" height="5"/>
<rect x="875" y="430" width="1" height="5"/>
<rect x="877" y="425" width="1" height="10"/>
<rect x="879" y="425" width="1" height="10"/>
<rect x="881" y="426" width="1" height="9"/>
<rect x="883" y="420" width="1" height="15"/>
<rect x="885" y="425" width="1" height="10"/>
<rect x="887" y="419" width="1" height="16"/>
<rect x="889" y="429" width="1" height="6"/>
<rect x="891" y="423" width="1" height="12"/>
<rect x="893" y="421" width="1" height="14"/>
<rect x="895" y="417" width="1" height="18"/>
<rect x="897" y="429" width="1" height="6"/>
<rect x="899" y="429" width="1" height="6"/>
<rect x="901" y="416" width="1" height="19"/>
<rect x="903" y="430" width="1" height="5"/>
<rect x="905" y="415" width="1" height="20"/>
<rect x="907" y="418" width="1" height="17"/>
<rect x="909" y="417" width="1" height="18"/>
<rect x="911" y="429" width="1" height="6"/>
<rect x="913" y="423" width="1" height="12"/>
<rect x="915" y="429" width="1" height="6"/>
<rect x="917" y="430" width="1" height="5"/>
<rect x="919" y="420" width="1" height="15"/>
<rect x="921" y="428" width="1" height="7"/>
<rect x="923" y="421" width="1" height="14"/>
<rect x="925" y="430" width="1" height="5"/>
<rect x="927" y="428" width="1" height="7"/>
<rect x="929" y="424" width="1" height="11"/>
<rect x="931" y="431" width="1" height="4"/>
<rect x="933" y="430" width="1" height="5"/>
<rect x="935" y="424" width="1" height="11"/>
<rect x="937" y="416" width="1" height="19"/>
<rect x="939" y="415" width="1" height="20"/>
<rect x="941" y="430" width="1" height="5"/>
<rect x="943" y="427" width="1" height="8"/>
<rect x="945" y="422" width="1" height="13"/>
<rect x="947" y="427" width="1" height="8"/>
<rect x="949" y="424" width="1" height="11"/>
<rect x="951" y="430" width="1" height="5"/>
<rect x="953" y="431" width="1" height="4"/>
<rect x="955" y="430" width="1" height="5"/>
</g>
<g stroke="#f0e868" stroke-width="1.2" fill="none">
<path d="M545 135.5H1019" stroke-width="1" shape-rendering="crispEdges"/>
<path d="M545 249.5H1019" stroke-width="1" shape-rendering="crispEdges"/>
<path d="M545 284.5H1019" stroke-width="1" shape-rendering="crispEdges"/>
<path d="M545 319.5H1019" stroke-width="1" shape-rendering="crispEdges"/>
<path d="M545 362.5H1019" stroke-width="1" shape-rendering="crispEdges"/>
<path d="M545 432.5H1019" stroke-width="1" shape-rendering="crispEdges"/>
<path d="M545 135.5L956 433" stroke-width="1"/>
<path d="M737 153.5L988 361" stroke-width="1"/>
<path d="M124.2 519.2L1019 581.4" stroke-width="1.1"/>
</g>
<g fill="#e4e4e4"><rect x="80" y="329.3" width="1" height="9.7"/><rect x="82" y="329.1" width="1" height="15.1"/><rect x="84" y="331.9" width="1" height="9.3"/><rect x="86" y="332.8" width="1" height="3.0"/><rect x="88" y="354.1" width="1" height="11.9"/><rect x="90" y="353.8" width="1" height="8.6"/><rect x="92" y="354.9" width="1" height="11.2"/><rect x="94" y="356.6" width="1" height="13.6"/><rect x="96" y="364.9" width="1" height="7.2"/><rect x="98" y="364.9" width="1" height="4.1"/><rect x="100" y="355.5" width="1" height="12.2"/><rect x="102" y="351.1" width="1" height="8.0"/><rect x="104" y="347.9" width="1" height="8.5"/><rect x="106" y="313.0" width="1" height="6.8"/><rect x="108" y="303.5" width="1" height="13.8"/><rect x="110" y="295.3" width="1" height="11.5"/><rect x="112" y="296.6" width="1" height="13.7"/><rect x="114" y="290.5" width="1" height="11.0"/><rect x="116" y="295.9" width="1" height="8.9"/><rect x="118" y="299.4" width="1" height="6.0"/><rect x="120" y="296.4" width="1" height="8.5"/><rect x="122" y="287.6" width="1" height="11.3"/><rect x="124" y="285.1" width="1" height="8.3"/><rect x="126" y="284.0" width="1" height="9.6"/><rect x="128" y="281.0" width="1" height="6.6"/><rect x="130" y="273.7" width="1" height="11.8"/><rect x="132" y="266.7" width="1" height="9.6"/><rect x="134" y="261.8" width="1" height="10.2"/><rect x="136" y="251.9" width="1" height="11.1"/><rect x="138" y="246.2" width="1" height="8.8"/><rect x="140" y="244.1" width="1" height="14.8"/><rect x="142" y="242.9" width="1" height="8.1"/><rect x="144" y="245.3" width="1" height="10.3"/><rect x="146" y="252.7" width="1" height="3.8"/><rect x="148" y="255.7" width="1" height="3.1"/><rect x="150" y="255.4" width="1" height="6.2"/><rect x="152" y="241.2" width="1" height="16.8"/><rect x="154" y="243.5" width="1" height="3.0"/><rect x="156" y="218.5" width="1" height="8.0"/><rect x="158" y="217.7" width="1" height="3.1"/><rect x="160" y="213.0" width="1" height="12.5"/><rect x="162" y="214.0" width="1" height="9.3"/><rect x="164" y="222.1" width="1" height="13.1"/><rect x="166" y="230.0" width="1" height="18.3"/><rect x="168" y="241.2" width="1" height="9.8"/><rect x="170" y="240.5" width="1" height="8.5"/><rect x="172" y="237.8" width="1" height="10.0"/><rect x="174" y="244.1" width="1" height="14.4"/><rect x="176" y="255.8" width="1" height="14.8"/><rect x="178" y="268.0" width="1" height="12.4"/><rect x="180" y="278.6" width="1" height="8.7"/><rect x="182" y="275.6" width="1" height="6.2"/><rect x="184" y="278.9" width="1" height="6.8"/><rect x="186" y="284.1" width="1" height="7.8"/><rect x="188" y="285.9" width="1" height="10.1"/><rect x="190" y="285.4" width="1" height="11.7"/><rect x="192" y="315.2" width="1" height="15.5"/><rect x="194" y="321.0" width="1" height="13.8"/><rect x="196" y="328.0" width="1" height="12.6"/><rect x="198" y="323.1" width="1" height="14.7"/><rect x="200" y="313.2" width="1" height="14.0"/><rect x="202" y="301.3" width="1" height="14.5"/><rect x="204" y="301.2" width="1" height="5.9"/><rect x="206" y="301.9" width="1" height="6.2"/><rect x="208" y="300.7" width="1" height="5.5"/><rect x="210" y="282.6" width="1" height="4.4"/><rect x="212" y="279.5" width="1" height="10.8"/><rect x="214" y="271.2" width="1" height="11.2"/><rect x="216" y="268.3" width="1" height="8.2"/><rect x="218" y="260.9" width="1" height="12.5"/><rect x="220" y="267.4" width="1" height="17.1"/><rect x="222" y="277.1" width="1" height="9.0"/><rect x="224" y="277.4" width="1" height="9.7"/><rect x="226" y="280.8" width="1" height="5.8"/><rect x="228" y="280.9" width="1" height="10.8"/><rect x="230" y="286.1" width="1" height="6.9"/><rect x="232" y="290.3" width="1" height="6.0"/><rect x="234" y="291.1" width="1" height="12.2"/><rect x="236" y="300.2" width="1" height="4.6"/><rect x="238" y="302.7" width="1" height="9.0"/><rect x="240" y="307.1" width="1" height="6.1"/><rect x="242" y="310.3" width="1" height="11.1"/><rect x="244" y="306.8" width="1" height="14.2"/><rect x="246" y="303.8" width="1" height="8.9"/><rect x="248" y="302.4" width="1" height="6.0"/><rect x="250" y="294.1" width="1" height="11.0"/><rect x="252" y="291.8" width="1" height="7.6"/><rect x="254" y="282.8" width="1" height="10.7"/><rect x="256" y="275.8" width="1" height="9.9"/><rect x="258" y="275.7" width="1" height="7.9"/><rect x="260" y="238.7" width="1" height="19.7"/><rect x="262" y="234.8" width="1" height="12.4"/><rect x="264" y="242.0" width="1" height="6.8"/><rect x="266" y="242.1" width="1" height="10.7"/><rect x="268" y="243.4" width="1" height="11.3"/><rect x="270" y="242.7" width="1" height="8.9"/><rect x="272" y="244.1" width="1" height="4.7"/><rect x="274" y="236.4" width="1" height="8.1"/><rect x="276" y="227.2" width="1" height="9.1"/><rect x="278" y="223.5" width="1" height="8.0"/><rect x="280" y="218.3" width="1" height="5.1"/><rect x="282" y="214.8" width="1" height="10.9"/><rect x="284" y="213.7" width="1" height="12.8"/><rect x="286" y="208.2" width="1" height="7.3"/><rect x="288" y="199.6" width="1" height="13.0"/><rect x="290" y="194.8" width="1" height="10.3"/><rect x="292" y="190.8" width="1" height="9.8"/><rect x="294" y="188.0" width="1" height="14.9"/><rect x="296" y="181.5" width="1" height="12.9"/><rect x="298" y="180.5" width="1" height="8.1"/><rect x="300" y="186.7" width="1" height="10.7"/><rect x="302" y="192.5" width="1" height="9.4"/><rect x="304" y="197.4" width="1" height="8.5"/><rect x="306" y="200.0" width="1" height="4.3"/><rect x="308" y="203.5" width="1" height="8.8"/><rect x="310" y="207.2" width="1" height="10.7"/><rect x="312" y="212.5" width="1" height="5.3"/><rect x="314" y="216.0" width="1" height="6.6"/><rect x="316" y="217.6" width="1" height="10.8"/><rect x="318" y="215.4" width="1" height="7.0"/><rect x="320" y="215.2" width="1" height="5.2"/><rect x="322" y="211.6" width="1" height="6.4"/><rect x="324" y="212.7" width="1" height="10.1"/><rect x="326" y="213.9" width="1" height="10.6"/><rect x="328" y="195.6" width="1" height="10.3"/><rect x="330" y="197.0" width="1" height="5.3"/><rect x="332" y="203.5" width="1" height="4.7"/><rect x="334" y="202.6" width="1" height="9.9"/><rect x="336" y="205.3" width="1" height="13.9"/><rect x="338" y="204.9" width="1" height="11.6"/><rect x="340" y="209.8" width="1" height="31.3"/><rect x="342" y="236.7" width="1" height="21.1"/><rect x="344" y="254.9" width="1" height="3.5"/><rect x="346" y="265.0" width="1" height="8.5"/><rect x="348" y="268.7" width="1" height="10.2"/><rect x="350" y="272.0" width="1" height="5.5"/><rect x="352" y="270.8" width="1" height="7.0"/><rect x="354" y="267.3" width="1" height="12.0"/><rect x="356" y="268.0" width="1" height="8.4"/><rect x="358" y="274.2" width="1" height="12.1"/><rect x="360" y="260.0" width="1" height="22.4"/><rect x="362" y="258.1" width="1" height="11.7"/><rect x="364" y="265.0" width="1" height="5.7"/><rect x="366" y="264.6" width="1" height="8.6"/><rect x="368" y="263.0" width="1" height="13.3"/><rect x="370" y="255.4" width="1" height="16.4"/><rect x="372" y="250.5" width="1" height="8.6"/><rect x="374" y="247.9" width="1" height="8.2"/><rect x="376" y="248.9" width="1" height="8.0"/><rect x="378" y="257.0" width="1" height="17.6"/><rect x="380" y="265.1" width="1" height="11.6"/><rect x="382" y="261.4" width="1" height="10.8"/><rect x="384" y="256.0" width="1" height="9.4"/><rect x="386" y="257.8" width="1" height="4.9"/><rect x="388" y="257.0" width="1" height="10.2"/><rect x="390" y="260.2" width="1" height="4.1"/><rect x="392" y="250.8" width="1" height="11.5"/><rect x="394" y="251.3" width="1" height="9.8"/><rect x="396" y="250.6" width="1" height="13.7"/><rect x="398" y="238.2" width="1" height="22.4"/><rect x="400" y="233.4" width="1" height="8.1"/><rect x="402" y="232.2" width="1" height="4.3"/><rect x="404" y="225.3" width="1" height="7.5"/><rect x="406" y="220.5" width="1" height="9.9"/><rect x="408" y="212.8" width="1" height="11.5"/><rect x="410" y="210.6" width="1" height="9.0"/><rect x="412" y="230.6" width="1" height="6.5"/><rect x="414" y="231.3" width="1" height="14.9"/><rect x="416" y="227.6" width="1" height="6.3"/><rect x="418" y="222.0" width="1" height="9.5"/><rect x="420" y="216.5" width="1" height="17.4"/><rect x="422" y="221.5" width="1" height="29.7"/><rect x="424" y="247.4" width="1" height="3.3"/><rect x="426" y="250.5" width="1" height="12.2"/><rect x="428" y="256.1" width="1" height="8.0"/><rect x="430" y="235.7" width="1" height="4.8"/><rect x="432" y="230.8" width="1" height="5.8"/><rect x="434" y="228.9" width="1" height="7.9"/><rect x="436" y="229.4" width="1" height="9.6"/><rect x="438" y="237.1" width="1" height="3.3"/><rect x="440" y="232.7" width="1" height="11.0"/><rect x="442" y="222.4" width="1" height="13.8"/><rect x="444" y="220.4" width="1" height="3.2"/><rect x="446" y="220.0" width="1" height="16.7"/><rect x="448" y="225.2" width="1" height="8.1"/><rect x="450" y="221.0" width="1" height="13.0"/><rect x="452" y="221.1" width="1" height="6.8"/><rect x="454" y="220.2" width="1" height="8.5"/><rect x="456" y="223.7" width="1" height="3.4"/><rect x="458" y="223.5" width="1" height="7.5"/><rect x="460" y="228.6" width="1" height="10.7"/><rect x="462" y="232.2" width="1" height="13.6"/><rect x="464" y="239.4" width="1" height="28.1"/><rect x="466" y="255.8" width="1" height="8.2"/><rect x="468" y="247.6" width="1" height="15.7"/><rect x="470" y="249.8" width="1" height="8.3"/><rect x="472" y="238.3" width="1" height="12.9"/><rect x="474" y="232.8" width="1" height="12.2"/><rect x="476" y="211.1" width="1" height="19.1"/><rect x="478" y="207.5" width="1" height="10.0"/><rect x="480" y="204.7" width="1" height="10.8"/><rect x="482" y="198.8" width="1" height="16.2"/><rect x="484" y="193.5" width="1" height="8.3"/><rect x="486" y="191.6" width="1" height="6.1"/><rect x="488" y="188.4" width="1" height="5.3"/><rect x="490" y="188.6" width="1" height="10.2"/><rect x="492" y="189.5" width="1" height="7.3"/><rect x="494" y="187.8" width="1" height="7.8"/><rect x="496" y="182.5" width="1" height="12.2"/><rect x="498" y="179.4" width="1" height="6.3"/><rect x="500" y="173.4" width="1" height="14.3"/><rect x="502" y="179.1" width="1" height="9.8"/><rect x="504" y="177.6" width="1" height="7.7"/><rect x="506" y="176.8" width="1" height="7.7"/><rect x="508" y="176.1" width="1" height="7.6"/><rect x="510" y="177.0" width="1" height="22.0"/><rect x="512" y="192.4" width="1" height="8.7"/><rect x="514" y="187.8" width="1" height="7.4"/><rect x="516" y="183.2" width="1" height="14.1"/><rect x="518" y="187.6" width="1" height="10.3"/><rect x="520" y="182.9" width="1" height="12.2"/><rect x="522" y="185.0" width="1" height="5.9"/><rect x="524" y="179.0" width="1" height="13.6"/><rect x="526" y="183.5" width="1" height="12.1"/><rect x="528" y="166.2" width="1" height="18.9"/><rect x="530" y="156.0" width="1" height="11.0"/><rect x="532" y="157.7" width="1" height="5.1"/><rect x="534" y="155.6" width="1" height="8.7"/><rect x="536" y="159.2" width="1" height="8.6"/><rect x="538" y="164.5" width="1" height="4.0"/><rect x="540" y="161.6" width="1" height="6.6"/><rect x="542" y="152.0" width="1" height="12.3"/><rect x="544" y="135.0" width="1" height="19.3"/><rect x="546" y="137.8" width="1" height="15.9"/><rect x="548" y="145.4" width="1" height="8.9"/><rect x="550" y="142.2" width="1" height="11.6"/><rect x="552" y="146.7" width="1" height="3.2"/><rect x="554" y="141.9" width="1" height="14.3"/><rect x="556" y="150.3" width="1" height="9.5"/><rect x="558" y="157.5" width="1" height="5.3"/><rect x="560" y="151.9" width="1" height="13.7"/><rect x="562" y="172.6" width="1" height="25.0"/><rect x="564" y="193.5" width="1" height="6.0"/><rect x="566" y="186.7" width="1" height="14.5"/><rect x="568" y="183.5" width="1" height="10.6"/><rect x="570" y="185.8" width="1" height="4.8"/><rect x="572" y="189.0" width="1" height="8.3"/><rect x="574" y="195.6" width="1" height="15.4"/><rect x="576" y="206.7" width="1" height="5.8"/><rect x="578" y="195.6" width="1" height="15.0"/><rect x="580" y="193.4" width="1" height="7.5"/><rect x="582" y="196.6" width="1" height="5.4"/><rect x="584" y="193.0" width="1" height="9.5"/><rect x="586" y="196.0" width="1" height="7.1"/><rect x="588" y="197.2" width="1" height="5.1"/><rect x="590" y="190.4" width="1" height="6.6"/><rect x="592" y="184.9" width="1" height="20.4"/><rect x="594" y="191.5" width="1" height="6.6"/><rect x="596" y="178.7" width="1" height="20.3"/><rect x="598" y="176.2" width="1" height="26.1"/><rect x="600" y="199.8" width="1" height="6.5"/><rect x="602" y="198.3" width="1" height="12.9"/><rect x="604" y="211.4" width="1" height="3.1"/><rect x="606" y="199.1" width="1" height="21.0"/><rect x="608" y="192.2" width="1" height="15.4"/><rect x="610" y="186.9" width="1" height="6.2"/><rect x="612" y="184.7" width="1" height="13.6"/><rect x="614" y="160.8" width="1" height="18.8"/><rect x="616" y="169.4" width="1" height="13.8"/><rect x="618" y="170.8" width="1" height="6.8"/><rect x="620" y="171.2" width="1" height="6.4"/><rect x="622" y="170.7" width="1" height="9.0"/><rect x="624" y="169.3" width="1" height="16.0"/><rect x="626" y="180.4" width="1" height="6.8"/><rect x="628" y="169.7" width="1" height="17.6"/><rect x="630" y="159.9" width="1" height="17.1"/><rect x="632" y="165.9" width="1" height="15.8"/><rect x="634" y="176.7" width="1" height="23.4"/><rect x="636" y="201.4" width="1" height="6.1"/><rect x="638" y="199.7" width="1" height="9.7"/><rect x="640" y="197.2" width="1" height="7.2"/><rect x="642" y="191.0" width="1" height="11.9"/><rect x="644" y="194.9" width="1" height="3.5"/><rect x="646" y="191.8" width="1" height="10.3"/><rect x="648" y="204.7" width="1" height="20.4"/><rect x="650" y="220.2" width="1" height="8.8"/><rect x="652" y="224.0" width="1" height="8.5"/><rect x="654" y="224.1" width="1" height="6.2"/><rect x="656" y="210.9" width="1" height="16.7"/><rect x="658" y="210.6" width="1" height="9.3"/><rect x="660" y="198.1" width="1" height="14.7"/><rect x="662" y="198.4" width="1" height="9.4"/><rect x="664" y="206.0" width="1" height="18.8"/><rect x="666" y="214.3" width="1" height="16.7"/><rect x="668" y="213.7" width="1" height="12.4"/><rect x="670" y="211.2" width="1" height="13.0"/><rect x="672" y="205.4" width="1" height="11.2"/><rect x="674" y="202.3" width="1" height="12.7"/><rect x="676" y="205.8" width="1" height="9.6"/><rect x="678" y="207.5" width="1" height="6.8"/><rect x="680" y="200.5" width="1" height="15.1"/><rect x="682" y="192.4" width="1" height="9.9"/><rect x="684" y="185.5" width="1" height="12.0"/><rect x="686" y="180.6" width="1" height="8.6"/><rect x="688" y="175.6" width="1" height="15.0"/><rect x="690" y="176.4" width="1" height="18.1"/><rect x="692" y="179.0" width="1" height="3.6"/><rect x="694" y="169.2" width="1" height="13.6"/><rect x="696" y="169.1" width="1" height="4.6"/><rect x="698" y="166.2" width="1" height="5.4"/><rect x="700" y="169.8" width="1" height="11.2"/><rect x="702" y="176.3" width="1" height="10.4"/><rect x="704" y="177.3" width="1" height="5.4"/><rect x="706" y="175.7" width="1" height="11.4"/><rect x="708" y="182.5" width="1" height="8.8"/><rect x="710" y="190.6" width="1" height="7.2"/><rect x="712" y="190.0" width="1" height="9.9"/><rect x="714" y="185.1" width="1" height="9.3"/><rect x="716" y="185.1" width="1" height="6.4"/><rect x="718" y="189.9" width="1" height="8.5"/><rect x="720" y="190.9" width="1" height="5.3"/><rect x="722" y="187.9" width="1" height="8.2"/><rect x="724" y="181.0" width="1" height="9.9"/><rect x="726" y="173.2" width="1" height="8.8"/><rect x="728" y="157.0" width="1" height="21.7"/><rect x="730" y="156.0" width="1" height="8.4"/><rect x="732" y="160.6" width="1" height="9.3"/><rect x="734" y="165.0" width="1" height="5.5"/><rect x="736" y="157.4" width="1" height="11.8"/><rect x="738" y="156.0" width="1" height="6.2"/><rect x="740" y="152.7" width="1" height="17.4"/><rect x="742" y="160.5" width="1" height="11.6"/><rect x="744" y="171.1" width="1" height="12.6"/><rect x="746" y="174.9" width="1" height="8.2"/><rect x="748" y="177.7" width="1" height="4.5"/><rect x="750" y="210.1" width="1" height="12.6"/><rect x="752" y="207.4" width="1" height="18.5"/><rect x="754" y="204.4" width="1" height="14.5"/><rect x="756" y="199.1" width="1" height="9.0"/><rect x="758" y="195.7" width="1" height="6.6"/><rect x="760" y="186.7" width="1" height="13.0"/><rect x="762" y="188.4" width="1" height="4.3"/><rect x="764" y="185.3" width="1" height="3.2"/><rect x="766" y="177.6" width="1" height="7.8"/><rect x="768" y="179.2" width="1" height="4.3"/><rect x="770" y="182.1" width="1" height="4.4"/><rect x="772" y="181.0" width="1" height="15.0"/><rect x="774" y="196.1" width="1" height="20.4"/><rect x="776" y="213.9" width="1" height="24.4"/><rect x="778" y="238.0" width="1" height="11.8"/><rect x="780" y="248.8" width="1" height="12.5"/><rect x="782" y="252.5" width="1" height="10.2"/><rect x="784" y="253.0" width="1" height="8.3"/><rect x="786" y="266.0" width="1" height="25.6"/><rect x="788" y="264.9" width="1" height="15.5"/><rect x="790" y="277.5" width="1" height="5.5"/><rect x="792" y="279.5" width="1" height="7.3"/><rect x="794" y="269.6" width="1" height="16.7"/><rect x="796" y="270.3" width="1" height="12.7"/><rect x="798" y="273.1" width="1" height="7.1"/><rect x="800" y="263.4" width="1" height="12.8"/><rect x="802" y="259.9" width="1" height="6.8"/><rect x="804" y="265.0" width="1" height="8.8"/><rect x="806" y="271.2" width="1" height="15.5"/><rect x="808" y="275.5" width="1" height="12.5"/><rect x="810" y="267.6" width="1" height="15.5"/><rect x="812" y="265.9" width="1" height="8.3"/><rect x="814" y="265.7" width="1" height="14.5"/><rect x="816" y="270.5" width="1" height="8.7"/><rect x="818" y="251.1" width="1" height="20.4"/><rect x="820" y="248.1" width="1" height="14.2"/><rect x="822" y="250.3" width="1" height="8.4"/><rect x="824" y="253.8" width="1" height="7.5"/><rect x="826" y="251.4" width="1" height="6.6"/><rect x="828" y="249.3" width="1" height="8.4"/><rect x="830" y="251.2" width="1" height="8.2"/><rect x="832" y="248.9" width="1" height="11.0"/><rect x="834" y="248.1" width="1" height="7.4"/><rect x="836" y="300.4" width="1" height="8.0"/><rect x="838" y="298.3" width="1" height="8.3"/><rect x="840" y="301.3" width="1" height="5.0"/><rect x="842" y="300.6" width="1" height="10.8"/><rect x="844" y="296.7" width="1" height="12.3"/><rect x="846" y="294.7" width="1" height="7.7"/><rect x="848" y="285.4" width="1" height="14.9"/><rect x="850" y="289.7" width="1" height="7.4"/><rect x="852" y="291.2" width="1" height="7.1"/><rect x="854" y="270.1" width="1" height="9.0"/><rect x="856" y="272.3" width="1" height="23.1"/><rect x="858" y="290.5" width="1" height="11.4"/><rect x="860" y="296.9" width="1" height="12.0"/><rect x="862" y="303.5" width="1" height="8.5"/><rect x="864" y="301.9" width="1" height="14.2"/><rect x="866" y="307.9" width="1" height="10.2"/><rect x="868" y="315.3" width="1" height="5.8"/><rect x="870" y="314.7" width="1" height="10.5"/><rect x="872" y="318.5" width="1" height="8.5"/><rect x="874" y="361.4" width="1" height="7.4"/><rect x="876" y="352.8" width="1" height="11.3"/><rect x="878" y="343.8" width="1" height="10.1"/><rect x="880" y="332.5" width="1" height="14.0"/><rect x="882" y="337.3" width="1" height="8.6"/><rect x="884" y="337.6" width="1" height="8.6"/><rect x="886" y="342.4" width="1" height="5.6"/><rect x="888" y="341.1" width="1" height="10.7"/><rect x="890" y="307.3" width="1" height="10.4"/><rect x="892" y="303.4" width="1" height="8.3"/><rect x="894" y="299.0" width="1" height="8.2"/><rect x="896" y="296.0" width="1" height="18.5"/><rect x="898" y="303.1" width="1" height="12.4"/><rect x="900" y="305.5" width="1" height="10.3"/><rect x="902" y="313.4" width="1" height="10.8"/><rect x="904" y="313.2" width="1" height="6.5"/><rect x="906" y="306.5" width="1" height="12.9"/><rect x="908" y="313.3" width="1" height="10.9"/><rect x="910" y="319.1" width="1" height="12.7"/><rect x="912" y="320.8" width="1" height="11.6"/><rect x="914" y="333.0" width="1" height="5.0"/><rect x="916" y="329.3" width="1" height="9.6"/><rect x="918" y="326.7" width="1" height="7.3"/><rect x="920" y="321.2" width="1" height="5.0"/><rect x="922" y="319.1" width="1" height="11.3"/><rect x="924" y="322.0" width="1" height="7.4"/><rect x="926" y="325.4" width="1" height="7.4"/><rect x="928" y="329.4" width="1" height="8.7"/><rect x="930" y="331.9" width="1" height="10.6"/><rect x="932" y="336.0" width="1" height="15.3"/><rect x="934" y="349.6" width="1" height="11.6"/><rect x="936" y="356.4" width="1" height="18.6"/><rect x="938" y="363.0" width="1" height="12.6"/><rect x="940" y="355.7" width="1" height="9.9"/><rect x="942" y="399.9" width="1" height="17.1"/><rect x="944" y="396.0" width="1" height="6.4"/><rect x="946" y="398.2" width="1" height="6.0"/><rect x="948" y="403.0" width="1" height="22.0"/><rect x="950" y="422.5" width="1" height="7.1"/><rect x="952" y="420.4" width="1" height="7.9"/><rect x="954" y="421.7" width="1" height="5.6"/><rect x="956" y="426.0" width="1" height="4.7"/></g>
<g fill="#008000"><rect x="83" y="332.7" width="2" height="4.0"/><rect x="87" y="357.7" width="2" height="6.0"/><rect x="89" y="354.2" width="2" height="7.7"/><rect x="99" y="355.7" width="2" height="12.0"/><rect x="101" y="351.1" width="2" height="8.0"/><rect x="107" y="304.8" width="2" height="11.6"/><rect x="109" y="298.5" width="2" height="8.0"/><rect x="113" y="295.4" width="2" height="6.0"/><rect x="115" y="298.3" width="2" height="4.0"/><rect x="119" y="298.2" width="2" height="6.0"/><rect x="121" y="291.0" width="2" height="7.0"/><rect x="123" y="285.1" width="2" height="8.0"/><rect x="125" y="284.8" width="2" height="5.0"/><rect x="129" y="275.5" width="2" height="7.8"/><rect x="131" y="267.3" width="2" height="8.1"/><rect x="133" y="262.2" width="2" height="7.4"/><rect x="135" y="253.3" width="2" height="8.0"/><rect x="137" y="247.0" width="2" height="8.0"/><rect x="139" y="244.2" width="2" height="8.0"/><rect x="149" y="255.4" width="2" height="6.0"/><rect x="151" y="244.0" width="2" height="13.2"/><rect x="153" y="243.7" width="2" height="2.0"/><rect x="157" y="217.7" width="2" height="2.9"/><rect x="169" y="240.9" width="2" height="7.2"/><rect x="181" y="275.6" width="2" height="6.0"/><rect x="195" y="330.0" width="2" height="7.0"/><rect x="197" y="323.2" width="2" height="8.2"/><rect x="199" y="314.2" width="2" height="6.9"/><rect x="201" y="306.3" width="2" height="8.6"/><rect x="203" y="305.2" width="2" height="2.0"/><rect x="205" y="302.3" width="2" height="5.0"/><rect x="209" y="283.0" width="2" height="3.9"/><rect x="211" y="279.6" width="2" height="6.0"/><rect x="213" y="272.5" width="2" height="7.0"/><rect x="215" y="271.0" width="2" height="5.0"/><rect x="223" y="279.5" width="2" height="7.0"/><rect x="243" y="313.0" width="2" height="6.1"/><rect x="245" y="306.5" width="2" height="6.0"/><rect x="247" y="302.4" width="2" height="5.0"/><rect x="249" y="294.1" width="2" height="10.0"/><rect x="251" y="291.9" width="2" height="7.2"/><rect x="253" y="283.8" width="2" height="5.3"/><rect x="255" y="278.6" width="2" height="7.0"/><rect x="259" y="239.7" width="2" height="18.3"/><rect x="271" y="244.8" width="2" height="4.0"/><rect x="273" y="236.5" width="2" height="8.0"/><rect x="275" y="227.2" width="2" height="9.1"/><rect x="277" y="224.0" width="2" height="4.7"/><rect x="281" y="216.6" width="2" height="9.0"/><rect x="283" y="213.7" width="2" height="7.0"/><rect x="285" y="208.2" width="2" height="7.3"/><rect x="287" y="200.4" width="2" height="9.5"/><rect x="289" y="194.8" width="2" height="9.8"/><rect x="293" y="191.7" width="2" height="8.0"/><rect x="295" y="183.9" width="2" height="10.0"/><rect x="297" y="181.2" width="2" height="7.3"/><rect x="303" y="197.6" width="2" height="8.0"/><rect x="315" y="219.2" width="2" height="3.0"/><rect x="317" y="216.5" width="2" height="6.0"/><rect x="321" y="214.9" width="2" height="3.0"/><rect x="323" y="213.4" width="2" height="8.0"/><rect x="327" y="198.0" width="2" height="8.0"/><rect x="333" y="204.1" width="2" height="8.0"/><rect x="335" y="205.4" width="2" height="7.6"/><rect x="343" y="255.4" width="2" height="2.0"/><rect x="345" y="267.5" width="2" height="2.1"/><rect x="351" y="270.8" width="2" height="7.0"/><rect x="353" y="269.2" width="2" height="7.1"/><rect x="359" y="260.4" width="2" height="21.9"/><rect x="369" y="256.1" width="2" height="10.0"/><rect x="371" y="251.1" width="2" height="8.0"/><rect x="373" y="247.9" width="2" height="7.0"/><rect x="379" y="266.7" width="2" height="10.0"/><rect x="381" y="261.5" width="2" height="10.0"/><rect x="383" y="256.4" width="2" height="8.3"/><rect x="385" y="258.7" width="2" height="4.0"/><rect x="389" y="260.3" width="2" height="3.6"/><rect x="391" y="251.3" width="2" height="11.0"/><rect x="395" y="252.7" width="2" height="7.0"/><rect x="397" y="239.5" width="2" height="14.4"/><rect x="399" y="236.2" width="2" height="5.0"/><rect x="401" y="232.5" width="2" height="4.0"/><rect x="403" y="225.3" width="2" height="7.1"/><rect x="405" y="220.8" width="2" height="7.0"/><rect x="407" y="215.4" width="2" height="6.2"/><rect x="409" y="211.8" width="2" height="7.0"/><rect x="411" y="233.5" width="2" height="3.0"/><rect x="413" y="232.3" width="2" height="6.0"/><rect x="415" y="230.4" width="2" height="3.3"/><rect x="417" y="222.2" width="2" height="9.2"/><rect x="429" y="236.7" width="2" height="3.0"/><rect x="431" y="231.4" width="2" height="5.0"/><rect x="437" y="237.4" width="2" height="3.0"/><rect x="439" y="233.1" width="2" height="8.0"/><rect x="441" y="223.7" width="2" height="12.5"/><rect x="447" y="225.8" width="2" height="5.0"/><rect x="449" y="221.9" width="2" height="7.0"/><rect x="455" y="224.0" width="2" height="2.0"/><rect x="461" y="235.2" width="2" height="7.0"/><rect x="465" y="259.2" width="2" height="4.0"/><rect x="467" y="252.9" width="2" height="10.0"/><rect x="469" y="250.3" width="2" height="7.5"/><rect x="471" y="242.7" width="2" height="7.6"/><rect x="475" y="212.8" width="2" height="12.5"/><rect x="477" y="209.2" width="2" height="6.0"/><rect x="481" y="200.0" width="2" height="12.2"/><rect x="483" y="193.5" width="2" height="8.0"/><rect x="485" y="192.0" width="2" height="4.0"/><rect x="487" y="189.3" width="2" height="4.1"/><rect x="491" y="190.9" width="2" height="4.0"/><rect x="493" y="187.8" width="2" height="7.0"/><rect x="495" y="186.4" width="2" height="5.0"/><rect x="497" y="181.2" width="2" height="4.0"/><rect x="499" y="178.2" width="2" height="7.9"/><rect x="503" y="179.3" width="2" height="5.0"/><rect x="507" y="176.3" width="2" height="7.0"/><rect x="513" y="191.1" width="2" height="3.6"/><rect x="519" y="186.9" width="2" height="8.0"/><rect x="521" y="185.0" width="2" height="5.0"/><rect x="525" y="183.5" width="2" height="8.0"/><rect x="527" y="166.6" width="2" height="18.2"/><rect x="529" y="156.4" width="2" height="10.1"/><rect x="533" y="161.9" width="2" height="2.3"/><rect x="535" y="161.5" width="2" height="6.0"/><rect x="537" y="164.9" width="2" height="3.0"/><rect x="539" y="162.2" width="2" height="5.5"/><rect x="541" y="152.0" width="2" height="9.6"/><rect x="543" y="137.3" width="2" height="14.4"/><rect x="549" y="144.6" width="2" height="7.2"/><rect x="551" y="147.0" width="2" height="2.0"/><rect x="557" y="157.5" width="2" height="5.0"/><rect x="559" y="154.9" width="2" height="7.5"/><rect x="565" y="187.6" width="2" height="7.7"/><rect x="577" y="198.0" width="2" height="10.7"/><rect x="579" y="194.5" width="2" height="6.0"/><rect x="583" y="193.9" width="2" height="8.0"/><rect x="585" y="199.6" width="2" height="3.0"/><rect x="587" y="197.3" width="2" height="3.7"/><rect x="591" y="190.3" width="2" height="7.0"/><rect x="595" y="181.0" width="2" height="15.0"/><rect x="605" y="204.7" width="2" height="10.0"/><rect x="607" y="192.6" width="2" height="13.4"/><rect x="609" y="187.0" width="2" height="6.0"/><rect x="611" y="185.3" width="2" height="7.0"/><rect x="615" y="171.2" width="2" height="8.0"/><rect x="621" y="171.9" width="2" height="7.0"/><rect x="627" y="173.4" width="2" height="12.0"/><rect x="629" y="165.4" width="2" height="10.0"/><rect x="637" y="199.7" width="2" height="7.3"/><rect x="639" y="197.7" width="2" height="2.0"/><rect x="645" y="194.1" width="2" height="7.0"/><rect x="651" y="224.0" width="2" height="8.0"/><rect x="653" y="224.1" width="2" height="6.0"/><rect x="655" y="214.7" width="2" height="12.5"/><rect x="657" y="211.3" width="2" height="5.0"/><rect x="659" y="201.9" width="2" height="9.3"/><rect x="665" y="220.4" width="2" height="9.8"/><rect x="667" y="217.5" width="2" height="8.0"/><rect x="669" y="213.0" width="2" height="8.0"/><rect x="671" y="208.7" width="2" height="7.0"/><rect x="673" y="205.9" width="2" height="7.0"/><rect x="677" y="208.8" width="2" height="5.0"/><rect x="679" y="200.5" width="2" height="10.0"/><rect x="681" y="193.4" width="2" height="8.5"/><rect x="683" y="186.3" width="2" height="5.0"/><rect x="687" y="180.0" width="2" height="8.7"/><rect x="691" y="179.1" width="2" height="3.0"/><rect x="693" y="170.3" width="2" height="9.0"/><rect x="695" y="169.1" width="2" height="3.3"/><rect x="703" y="177.3" width="2" height="5.0"/><rect x="711" y="190.8" width="2" height="6.3"/><rect x="713" y="185.4" width="2" height="8.0"/><rect x="719" y="190.9" width="2" height="5.0"/><rect x="723" y="183.4" width="2" height="7.5"/><rect x="725" y="173.2" width="2" height="8.7"/><rect x="727" y="161.4" width="2" height="13.0"/><rect x="729" y="156.9" width="2" height="7.4"/><rect x="733" y="165.2" width="2" height="5.0"/><rect x="735" y="157.9" width="2" height="8.5"/><rect x="751" y="210.4" width="2" height="10.2"/><rect x="753" y="205.2" width="2" height="8.0"/><rect x="755" y="199.5" width="2" height="8.0"/><rect x="757" y="198.2" width="2" height="3.0"/><rect x="759" y="188.1" width="2" height="11.5"/><rect x="763" y="185.3" width="2" height="3.1"/><rect x="765" y="181.4" width="2" height="4.0"/><rect x="767" y="180.5" width="2" height="3.0"/><rect x="769" y="182.9" width="2" height="3.0"/><rect x="781" y="256.1" width="2" height="5.0"/><rect x="783" y="254.4" width="2" height="6.0"/><rect x="785" y="266.5" width="2" height="23.7"/><rect x="793" y="270.2" width="2" height="15.6"/><rect x="797" y="274.8" width="2" height="5.0"/><rect x="799" y="263.6" width="2" height="12.3"/><rect x="809" y="268.4" width="2" height="14.2"/><rect x="811" y="266.0" width="2" height="7.0"/><rect x="815" y="272.1" width="2" height="7.2"/><rect x="817" y="255.3" width="2" height="16.2"/><rect x="825" y="253.1" width="2" height="3.0"/><rect x="829" y="253.2" width="2" height="2.0"/><rect x="835" y="300.4" width="2" height="8.0"/><rect x="837" y="303.0" width="2" height="3.0"/><rect x="839" y="302.2" width="2" height="3.0"/><rect x="843" y="299.3" width="2" height="7.0"/><rect x="845" y="295.2" width="2" height="5.0"/><rect x="847" y="291.5" width="2" height="8.0"/><rect x="851" y="291.2" width="2" height="6.0"/><rect x="871" y="319.6" width="2" height="6.0"/><rect x="873" y="361.6" width="2" height="7.0"/><rect x="875" y="352.8" width="2" height="10.0"/><rect x="877" y="344.1" width="2" height="7.9"/><rect x="879" y="335.8" width="2" height="10.0"/><rect x="883" y="338.0" width="2" height="5.0"/><rect x="889" y="308.1" width="2" height="8.1"/><rect x="891" y="303.4" width="2" height="7.0"/><rect x="893" y="300.8" width="2" height="5.0"/><rect x="903" y="313.2" width="2" height="6.0"/><rect x="915" y="329.7" width="2" height="7.0"/><rect x="917" y="326.7" width="2" height="6.9"/><rect x="919" y="321.4" width="2" height="3.0"/><rect x="937" y="363.3" width="2" height="12.2"/><rect x="941" y="400.2" width="2" height="16.4"/><rect x="943" y="398.3" width="2" height="2.0"/><rect x="951" y="424.6" width="2" height="2.0"/></g>
<g fill="#ff0000"><rect x="79" y="333.7" width="2" height="5.0"/><rect x="81" y="332.9" width="2" height="8.1"/><rect x="85" y="332.8" width="2" height="3.0"/><rect x="91" y="358.8" width="2" height="6.0"/><rect x="93" y="359.5" width="2" height="8.0"/><rect x="95" y="365.6" width="2" height="2.7"/><rect x="97" y="365.7" width="2" height="3.0"/><rect x="103" y="349.5" width="2" height="7.0"/><rect x="105" y="315.0" width="2" height="3.0"/><rect x="111" y="298.5" width="2" height="6.0"/><rect x="117" y="299.4" width="2" height="6.0"/><rect x="127" y="283.7" width="2" height="3.0"/><rect x="141" y="244.6" width="2" height="6.0"/><rect x="143" y="247.1" width="2" height="5.0"/><rect x="145" y="252.8" width="2" height="3.0"/><rect x="147" y="255.9" width="2" height="2.6"/><rect x="155" y="218.5" width="2" height="8.0"/><rect x="159" y="214.5" width="2" height="7.4"/><rect x="161" y="215.7" width="2" height="7.0"/><rect x="163" y="222.2" width="2" height="8.3"/><rect x="165" y="230.0" width="2" height="18.0"/><rect x="167" y="243.5" width="2" height="7.0"/><rect x="171" y="241.6" width="2" height="5.8"/><rect x="173" y="247.4" width="2" height="8.8"/><rect x="175" y="255.8" width="2" height="13.3"/><rect x="177" y="268.3" width="2" height="11.0"/><rect x="179" y="278.6" width="2" height="2.0"/><rect x="183" y="278.9" width="2" height="5.9"/><rect x="185" y="285.0" width="2" height="5.4"/><rect x="187" y="286.1" width="2" height="8.0"/><rect x="189" y="288.9" width="2" height="7.0"/><rect x="191" y="315.4" width="2" height="7.9"/><rect x="193" y="321.2" width="2" height="13.4"/><rect x="207" y="300.7" width="2" height="5.0"/><rect x="217" y="267.2" width="2" height="6.0"/><rect x="219" y="270.5" width="2" height="12.1"/><rect x="221" y="279.8" width="2" height="6.0"/><rect x="225" y="281.6" width="2" height="4.0"/><rect x="227" y="281.3" width="2" height="8.0"/><rect x="229" y="286.8" width="2" height="3.9"/><rect x="231" y="290.3" width="2" height="6.0"/><rect x="233" y="294.6" width="2" height="6.0"/><rect x="235" y="300.3" width="2" height="4.2"/><rect x="237" y="303.9" width="2" height="3.0"/><rect x="239" y="307.9" width="2" height="4.2"/><rect x="241" y="312.0" width="2" height="6.3"/><rect x="257" y="279.7" width="2" height="2.0"/><rect x="261" y="236.2" width="2" height="8.0"/><rect x="263" y="243.1" width="2" height="3.3"/><rect x="265" y="243.3" width="2" height="9.4"/><rect x="267" y="245.8" width="2" height="7.0"/><rect x="269" y="246.4" width="2" height="5.0"/><rect x="279" y="218.6" width="2" height="4.0"/><rect x="291" y="193.5" width="2" height="6.0"/><rect x="299" y="186.9" width="2" height="10.5"/><rect x="301" y="196.5" width="2" height="5.4"/><rect x="305" y="200.4" width="2" height="3.8"/><rect x="307" y="203.5" width="2" height="5.9"/><rect x="309" y="209.7" width="2" height="5.0"/><rect x="311" y="212.5" width="2" height="5.0"/><rect x="313" y="216.3" width="2" height="3.1"/><rect x="319" y="215.6" width="2" height="3.0"/><rect x="325" y="215.7" width="2" height="7.0"/><rect x="329" y="197.1" width="2" height="5.0"/><rect x="331" y="203.5" width="2" height="4.2"/><rect x="337" y="208.7" width="2" height="6.0"/><rect x="339" y="210.5" width="2" height="29.7"/><rect x="341" y="240.0" width="2" height="15.7"/><rect x="347" y="268.7" width="2" height="4.8"/><rect x="349" y="274.2" width="2" height="2.0"/><rect x="355" y="268.1" width="2" height="8.3"/><rect x="357" y="277.4" width="2" height="6.6"/><rect x="361" y="260.5" width="2" height="7.0"/><rect x="363" y="265.0" width="2" height="4.0"/><rect x="365" y="264.8" width="2" height="6.0"/><rect x="367" y="263.2" width="2" height="6.0"/><rect x="375" y="250.4" width="2" height="6.2"/><rect x="377" y="257.0" width="2" height="17.4"/><rect x="387" y="260.9" width="2" height="4.0"/><rect x="393" y="251.4" width="2" height="8.8"/><rect x="419" y="220.2" width="2" height="9.5"/><rect x="421" y="223.5" width="2" height="25.0"/><rect x="423" y="247.4" width="2" height="3.0"/><rect x="425" y="251.2" width="2" height="11.0"/><rect x="427" y="261.3" width="2" height="2.0"/><rect x="433" y="229.3" width="2" height="7.0"/><rect x="435" y="230.8" width="2" height="8.0"/><rect x="443" y="221.5" width="2" height="2.0"/><rect x="445" y="221.4" width="2" height="10.0"/><rect x="451" y="222.0" width="2" height="5.0"/><rect x="453" y="220.2" width="2" height="7.7"/><rect x="457" y="226.5" width="2" height="4.1"/><rect x="459" y="228.9" width="2" height="10.0"/><rect x="463" y="239.4" width="2" height="24.2"/><rect x="473" y="236.1" width="2" height="7.7"/><rect x="479" y="208.2" width="2" height="5.0"/><rect x="489" y="189.3" width="2" height="5.6"/><rect x="501" y="179.1" width="2" height="6.0"/><rect x="505" y="177.0" width="2" height="7.0"/><rect x="509" y="177.3" width="2" height="17.4"/><rect x="511" y="192.4" width="2" height="7.7"/><rect x="515" y="189.7" width="2" height="5.0"/><rect x="517" y="187.6" width="2" height="10.0"/><rect x="523" y="182.4" width="2" height="9.2"/><rect x="531" y="157.8" width="2" height="5.0"/><rect x="545" y="137.8" width="2" height="10.0"/><rect x="547" y="146.1" width="2" height="6.0"/><rect x="553" y="144.8" width="2" height="10.0"/><rect x="555" y="152.1" width="2" height="6.0"/><rect x="561" y="173.7" width="2" height="23.3"/><rect x="563" y="193.5" width="2" height="4.0"/><rect x="567" y="186.0" width="2" height="4.0"/><rect x="569" y="185.8" width="2" height="3.5"/><rect x="571" y="189.2" width="2" height="8.1"/><rect x="573" y="197.3" width="2" height="12.7"/><rect x="575" y="208.4" width="2" height="3.0"/><rect x="581" y="196.8" width="2" height="5.0"/><rect x="589" y="192.9" width="2" height="4.0"/><rect x="593" y="191.9" width="2" height="4.0"/><rect x="597" y="179.9" width="2" height="22.4"/><rect x="599" y="200.1" width="2" height="6.0"/><rect x="601" y="200.4" width="2" height="9.0"/><rect x="603" y="211.4" width="2" height="3.0"/><rect x="613" y="160.8" width="2" height="18.8"/><rect x="617" y="173.4" width="2" height="4.0"/><rect x="619" y="172.4" width="2" height="4.0"/><rect x="623" y="174.1" width="2" height="6.2"/><rect x="625" y="180.4" width="2" height="5.0"/><rect x="631" y="166.3" width="2" height="12.2"/><rect x="633" y="178.8" width="2" height="21.3"/><rect x="635" y="202.3" width="2" height="5.0"/><rect x="641" y="193.4" width="2" height="9.4"/><rect x="643" y="195.1" width="2" height="3.3"/><rect x="647" y="206.0" width="2" height="18.5"/><rect x="649" y="222.5" width="2" height="6.0"/><rect x="661" y="199.6" width="2" height="8.0"/><rect x="663" y="206.5" width="2" height="18.1"/><rect x="675" y="209.1" width="2" height="5.0"/><rect x="685" y="181.2" width="2" height="8.0"/><rect x="689" y="180.7" width="2" height="6.0"/><rect x="697" y="166.8" width="2" height="4.7"/><rect x="699" y="170.2" width="2" height="10.0"/><rect x="701" y="176.6" width="2" height="8.0"/><rect x="705" y="175.8" width="2" height="10.0"/><rect x="707" y="182.5" width="2" height="7.5"/><rect x="709" y="190.8" width="2" height="7.0"/><rect x="715" y="185.3" width="2" height="5.9"/><rect x="717" y="190.0" width="2" height="7.7"/><rect x="721" y="189.8" width="2" height="4.0"/><rect x="731" y="161.4" width="2" height="8.3"/><rect x="737" y="156.1" width="2" height="6.0"/><rect x="739" y="155.6" width="2" height="10.0"/><rect x="741" y="164.5" width="2" height="7.4"/><rect x="743" y="171.6" width="2" height="8.4"/><rect x="745" y="175.8" width="2" height="6.0"/><rect x="747" y="179.1" width="2" height="3.0"/><rect x="749" y="210.4" width="2" height="10.9"/><rect x="761" y="188.4" width="2" height="2.0"/><rect x="771" y="184.6" width="2" height="11.0"/><rect x="773" y="197.0" width="2" height="19.0"/><rect x="775" y="215.4" width="2" height="22.5"/><rect x="777" y="238.5" width="2" height="10.9"/><rect x="779" y="249.0" width="2" height="9.1"/><rect x="787" y="266.5" width="2" height="11.5"/><rect x="789" y="277.8" width="2" height="5.0"/><rect x="791" y="279.5" width="2" height="7.2"/><rect x="795" y="270.7" width="2" height="10.0"/><rect x="801" y="262.5" width="2" height="3.6"/><rect x="803" y="265.4" width="2" height="8.0"/><rect x="805" y="271.9" width="2" height="14.0"/><rect x="807" y="279.0" width="2" height="9.0"/><rect x="813" y="268.5" width="2" height="9.7"/><rect x="819" y="251.1" width="2" height="7.9"/><rect x="821" y="252.7" width="2" height="6.0"/><rect x="823" y="254.0" width="2" height="6.0"/><rect x="827" y="250.4" width="2" height="7.0"/><rect x="831" y="248.9" width="2" height="8.0"/><rect x="833" y="249.5" width="2" height="4.0"/><rect x="841" y="302.7" width="2" height="7.3"/><rect x="849" y="292.2" width="2" height="2.0"/><rect x="853" y="270.2" width="2" height="9.0"/><rect x="855" y="274.4" width="2" height="19.6"/><rect x="857" y="293.6" width="2" height="7.0"/><rect x="859" y="298.6" width="2" height="10.0"/><rect x="861" y="305.7" width="2" height="4.0"/><rect x="863" y="308.2" width="2" height="4.0"/><rect x="865" y="307.9" width="2" height="10.0"/><rect x="867" y="315.3" width="2" height="5.0"/><rect x="869" y="320.1" width="2" height="3.2"/><rect x="881" y="340.5" width="2" height="3.2"/><rect x="885" y="342.4" width="2" height="4.5"/><rect x="887" y="342.5" width="2" height="8.8"/><rect x="895" y="300.8" width="2" height="8.0"/><rect x="897" y="303.2" width="2" height="8.0"/><rect x="899" y="307.5" width="2" height="6.0"/><rect x="901" y="313.9" width="2" height="6.0"/><rect x="905" y="311.4" width="2" height="7.7"/><rect x="907" y="315.1" width="2" height="9.1"/><rect x="909" y="319.4" width="2" height="8.0"/><rect x="911" y="324.9" width="2" height="7.6"/><rect x="913" y="333.0" width="2" height="5.0"/><rect x="921" y="320.9" width="2" height="7.0"/><rect x="923" y="322.0" width="2" height="7.0"/><rect x="925" y="325.4" width="2" height="7.0"/><rect x="927" y="330.1" width="2" height="6.0"/><rect x="929" y="332.9" width="2" height="7.8"/><rect x="931" y="342.1" width="2" height="8.4"/><rect x="933" y="350.1" width="2" height="10.8"/><rect x="935" y="360.4" width="2" height="13.2"/><rect x="939" y="357.6" width="2" height="7.0"/><rect x="945" y="398.2" width="2" height="6.0"/><rect x="947" y="403.1" width="2" height="21.8"/><rect x="949" y="422.9" width="2" height="6.0"/><rect x="953" y="425.0" width="2" height="2.1"/><rect x="955" y="426.4" width="2" height="4.0"/></g>
<polyline points="78.5,576.1 80.6,587.9 83.2,586.6 85.9,573.4 87.2,589.3 87.7,626.2 88.5,643.4 89.8,631.5 92.5,638.1 95.1,640.8 97.7,651.3 99.6,639.5 101.7,615.7 103.6,599.8 105.7,566.8 107.5,562.8 109.6,551.7 112.3,554.9 115.4,553.6 118.3,557.6 120.2,570.8 122.0,553.6 125.0,552.3 127.6,553.6 130.2,547.0 133.4,535.1 137.4,521.9 139.2,533.8 140.8,528.5 142.7,544.3 144.8,558.9 146.6,557.6 148.7,565.5 150.6,572.1 152.4,557.6 154.5,552.3 156.7,537.7 159.8,534.3 162.5,544.3 164.3,562.8 165.9,584.0 167.8,603.8 169.9,598.5 171.7,585.3 173.6,605.1 175.7,618.3 178.3,642.1 181.0,636.8 184.1,644.7 187.6,652.7 190.2,668.5 192.9,681.7 195.5,691.8 197.6,665.9 200.3,652.7 203.4,634.2 205.3,642.1 207.4,623.6 210.0,611.7 212.7,607.8 214.8,598.5 218.5,594.0 220.1,607.8 222.7,615.7 225.4,623.6 227.2,609.1 229.3,623.6 232.0,631.5 235.1,640.8 237.8,644.7 240.4,654.0 242.5,659.3 244.4,639.5 246.2,643.4 248.3,634.2 251.0,615.7 253.6,602.5 257.1,594.5 258.1,562.8 259.7,552.3 261.5,562.8 264.2,565.5 267.6,576.1 270.8,570.8 272.9,565.5 274.8,574.7 276.1,562.8 278.7,554.9 281.4,551.0 284.5,549.6 287.2,541.7 289.8,535.1 291.9,543.0 294.6,537.7 297.2,531.1 299.3,544.3 300.6,560.2 302.0,577.4 303.8,572.1 305.9,569.4 307.3,584.0 309.1,599.8 311.0,598.5 313.1,607.8 315.2,615.7 317.8,613.0 319.7,615.7 320.0,609.8 322.1,615.1 324.0,609.8 325.8,599.3 327.9,582.1 329.5,580.8 331.1,596.6 333.2,600.6 335.9,603.2 338.5,607.2 339.8,625.7 341.1,646.8 342.5,665.3 344.3,681.2 346.4,674.6 348.5,679.8 351.7,686.4 353.8,675.9 355.7,661.3 357.5,671.9 359.1,678.5 361.0,641.5 363.6,649.5 366.2,644.2 369.7,638.9 371.5,624.4 374.2,620.4 376.0,615.1 378.7,648.1 382.1,631.0 384.7,625.7 389.2,633.6 391.9,620.4 393.4,609.8 394.8,621.7 397.4,609.8 399.3,594.0 401.1,590.0 402.4,595.3 404.5,583.4 407.7,576.8 410.4,567.6 411.9,586.1 413.0,603.2 415.6,607.2 417.8,597.9 419.9,590.0 421.7,597.9 423.6,624.4 425.7,633.6 427.5,644.2 429.6,615.1 432.3,609.8 434.4,604.5 436.2,612.5 438.4,611.1 440.2,612.5 442.3,596.6 444.2,588.7 446.3,599.3 448.1,607.2 451.3,597.9 453.4,604.5 455.5,600.6 457.4,608.5 459.5,625.7 461.3,621.7 462.7,636.2 464.5,656.1 466.6,646.8 468.5,641.5 470.1,642.9 471.9,631.0 474.0,617.8 475.4,599.3 476.7,586.1 478.5,585.5 481.2,584.7 483.3,572.8 485.1,570.2 487.8,568.9 489.6,561.7 491.7,576.8 494.4,571.5 497.0,567.6 498.6,571.5 500.7,562.3 503.6,566.2 505.7,568.9 508.1,567.6 509.7,578.1 510.8,591.3 511.8,599.3 513.4,595.3 515.0,590.0 516.8,599.3 518.7,604.0 520.3,595.3 522.1,586.1 524.0,596.6 525.5,594.0 527.4,579.4 529.2,566.2 531.4,558.3 532.7,553.0 534.0,567.6 535.3,575.5 536.6,572.8 538.5,580.8 540.6,571.5 542.5,557.0 545.1,549.6 546.7,566.2 548.5,570.2 550.4,571.5 552.0,575.5 553.8,572.8 555.7,586.1 557.8,601.9 559.9,597.9 561.2,612.5 562.5,636.2 563.6,652.1 565.2,644.2 567.0,636.2 568.9,634.9 570.0,637.6 572.1,646.8 574.0,657.4 575.3,666.6 577.4,649.5 579.2,640.2 581.1,645.5 583.2,636.2 585.3,642.9 587.2,646.8 589.0,631.0 591.1,633.6 593.8,631.0 595.1,625.7 596.4,605.9 597.7,625.7 599.1,637.6 600.6,634.9 602.2,644.2 604.3,650.8 606.5,644.2 608.3,631.0 609.6,615.1 611.7,609.8 613.1,588.7 615.4,603.2 617.6,597.9 619.7,600.6 621.5,596.6 624.2,604.5 626.8,616.4 628.7,607.2 630.8,594.0 632.9,617.8 634.7,633.6 636.6,642.9 639.2,634.9 641.9,631.0 644.0,633.6 645.6,623.0 646.6,644.2 647.9,662.7 650.6,658.7 653.2,658.7 655.1,652.1 657.2,641.5 659.0,625.7 660.6,613.8 662.5,627.0 664.3,648.1 666.4,644.2 669.1,636.2 671.7,629.6 674.4,623.0 677.0,619.1 678.9,628.3 680.4,607.2 682.3,597.9 684.9,590.0 687.6,586.1 690.2,583.4 692.3,580.8 694.2,570.2 696.3,567.6 698.4,564.4 699.5,580.8 700.8,591.3 702.9,600.6 704.7,595.3 706.6,603.2 708.7,616.4 711.3,628.9 713.5,620.4 715.3,604.5 716.9,621.7 719.3,620.4 721.9,618.3 724.0,607.2 725.9,596.6 727.7,580.8 729.0,566.2 730.4,562.3 731.2,578.1 732.5,594.0 734.3,586.1 737.0,579.4 739.1,587.4 741.2,596.6 743.1,613.8 744.9,617.8 746.5,619.1 747.5,636.2 748.6,657.4 749.7,675.9 751.0,662.7 752.3,649.5 754.4,642.9 757.1,636.2 758.9,631.0 760.2,619.1 762.9,619.9 765.5,615.1 767.6,611.7 769.5,613.8 771.3,615.6 772.9,625.7 774.0,638.9 775.5,660.0 777.4,673.2 780.0,683.8 782.2,695.7 784.0,707.6 785.3,686.4 786.6,664.0 788.5,673.2 790.6,675.9 792.5,682.5 793.8,662.7 794.6,652.1 795.9,658.7 798.5,654.7 800.4,646.8 802.0,641.5 803.8,644.2 805.7,652.1 807.8,657.4 809.9,646.8 811.7,637.6 813.6,640.2 815.2,644.2 816.2,650.8 817.3,631.0 818.3,620.4 821.0,620.9 823.6,620.9 827.6,619.9 831.6,617.8 833.4,615.1 833.3,614.9 834.6,655.9 836.4,669.1 838.5,667.8 841.2,666.4 843.8,667.8 845.7,657.2 849.1,650.6 851.2,637.4 852.3,616.2 854.4,616.2 855.7,637.4 857.0,645.3 859.7,651.9 862.3,657.2 865.0,661.2 867.1,658.0 868.9,665.1 871.0,670.4 872.9,684.9 874.2,701.3 876.1,679.7 878.2,663.8 880.3,650.6 882.1,659.8 884.8,655.9 886.9,651.9 888.2,659.8 889.5,632.1 890.6,613.6 892.7,609.6 895.3,604.4 898.0,611.0 900.6,620.2 902.5,621.5 904.6,626.8 906.7,613.6 908.0,626.8 909.9,632.1 912.5,638.7 914.6,644.0 916.5,630.8 919.1,626.8 922.3,622.1 925.2,628.1 927.8,634.7 929.7,648.0 931.5,659.8 933.7,655.9 935.8,671.7 937.6,683.6 939.5,655.9 940.5,679.7 942.1,687.6 944.2,681.0 946.9,686.3 949.0,695.0 951.6,691.5 953.5,687.6 955.3,684.9 956.9,687.1" fill="none" stroke="#00ee3c" stroke-width="1" stroke-linejoin="round"/>
<g font-family="'Liberation Sans',sans-serif" font-size="10" fill="#fff" letter-spacing="0.35">
<text x="71.5" y="147" text-anchor="end">3900</text>
<text x="71.5" y="179" text-anchor="end">3850</text>
<text x="71.5" y="211" text-anchor="end">3800</text>
<text x="71.5" y="243" text-anchor="end">3750</text>
<text x="71.5" y="275" text-anchor="end">3700</text>
<text x="71.5" y="307" text-anchor="end">3650</text>
<text x="71.5" y="339" text-anchor="end">3600</text>
<text x="71.5" y="371" text-anchor="end">3550</text>
<text x="71.5" y="403" text-anchor="end">3500</text>
<text x="71.5" y="435" text-anchor="end">3450</text>
<text x="71.5" y="526" text-anchor="end">80</text>
<text x="71.5" y="557" text-anchor="end">70</text>
<text x="71.5" y="587" text-anchor="end">60</text>
<text x="71.5" y="618" text-anchor="end">50</text>
<text x="71.5" y="649" text-anchor="end">40</text>
<text x="71.5" y="679" text-anchor="end">30</text>
<text x="71.5" y="710" text-anchor="end">20</text>
<text x="81" y="446">12:59</text><text x="81" y="459" letter-spacing="0.4">29 maj</text>
<text x="117" y="446">13:59</text><text x="117" y="459" letter-spacing="0.4">31 maj</text>
<text x="153" y="446">14:59</text><text x="153" y="459" letter-spacing="0.4">4 cze</text>
<text x="189" y="446">15:59</text><text x="189" y="459" letter-spacing="0.4">6 cze</text>
<text x="226" y="446">16:34</text><text x="226" y="459" letter-spacing="0.4">11 cze</text>
<text x="262" y="446">9:59</text><text x="262" y="459" letter-spacing="0.4">14 cze</text>
<text x="298" y="446">10:59</text><text x="298" y="459" letter-spacing="0.4">18 cze</text>
<text x="334" y="446">11:59</text><text x="334" y="459" letter-spacing="0.4">20 cze</text>
<text x="371" y="446">12:59</text><text x="371" y="459" letter-spacing="0.4">22 cze</text>
<text x="407" y="446">13:59</text><text x="407" y="459" letter-spacing="0.4">26 cze</text>
<text x="443" y="446">14:59</text><text x="443" y="459" letter-spacing="0.4">28 cze</text>
<text x="479" y="446">9:59</text><text x="479" y="459" letter-spacing="0.4">3 lip</text>
<text x="516" y="446">10:59</text><text x="516" y="459" letter-spacing="0.4">5 lip</text>
<text x="552" y="446">11:59</text><text x="552" y="459" letter-spacing="0.4">9 lip</text>
<text x="588" y="446">12:59</text><text x="588" y="459" letter-spacing="0.4">11 lip</text>
<text x="624" y="446">13:59</text><text x="624" y="459" letter-spacing="0.4">13 lip</text>
<text x="661" y="446">14:59</text><text x="661" y="459" letter-spacing="0.4">17 lip</text>
<text x="697" y="446">15:59</text><text x="697" y="459" letter-spacing="0.4">19 lip</text>
<text x="733" y="446">16:34</text><text x="733" y="459" letter-spacing="0.4">23 lip</text>
<text x="769" y="446">9:59</text><text x="769" y="459" letter-spacing="0.4">26 lip</text>
<text x="806" y="446">10:59</text><text x="806" y="459" letter-spacing="0.4">30 lip</text>
<text x="842" y="446">11:59</text><text x="842" y="459" letter-spacing="0.4">1 sie</text>
<text x="878" y="446">10:59</text><text x="878" y="459" letter-spacing="0.4">6 sie</text>
<text x="914" y="446">11:59</text><text x="914" y="459" letter-spacing="0.4">8 sie</text>
<text x="951" y="446">12:59</text><text x="951" y="459" letter-spacing="0.4">10 sie</text>
</g>
<text x="965.7" y="134.8" font-family="'Liberation Sans',sans-serif" font-size="10" fill="#ff8000" textLength="38.3">3460.86</text>
<rect x="965" y="143" width="39" height="10" fill="#222222"/>
<text x="967" y="152" font-family="'Liberation Sans',sans-serif" font-size="10" fill="#1e9cff" textLength="34">140989</text>
<text x="965.4" y="516.4" font-family="'Liberation Sans',sans-serif" font-size="10" fill="#00ee3c" textLength="26.5">27.00</text>
</svg>
<div class="a" style="left:9px;top:718px;width:829px;height:17px;box-shadow:inset 1px 1px 0 #808080,inset -1px -1px 0 #fff"></div>
<div class="a" style="left:838px;top:718px;width:177px;height:17px;box-shadow:inset 1px 1px 0 #808080,inset -1px -1px 0 #fff"></div>
<div class="t" style="left:15px;top:720px;letter-spacing:-0.1px">Połączony...</div>
<div class="t" style="left:910px;top:720px;letter-spacing:-0.2px">WIG20</div>
<div class="a" style="left:0;top:737px;width:1024px;height:3px;background:#fff"></div>
<div class="a" style="left:0;top:738px;width:1024px;height:1px;background:#f0efec"></div>
<div class="a" style="left:0;top:740px;width:1024px;height:2px;background:#d4d0c8"></div>
</body></html>
